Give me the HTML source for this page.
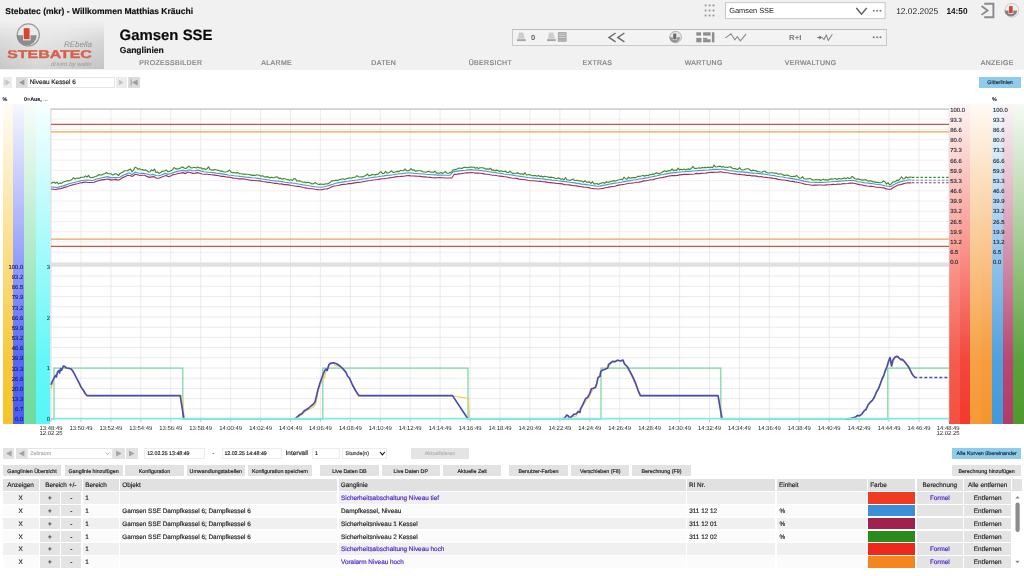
<!DOCTYPE html>
<html lang="de"><head><meta charset="utf-8"><title>Stebatec - Gamsen SSE - Ganglinien</title>
<style>
html,body{margin:0;padding:0;background:#fff;}
body{width:1024px;height:576px;overflow:hidden;position:relative;font-family:"Liberation Sans", sans-serif;}
#w{position:absolute;left:0;top:0;width:1024px;height:576px;will-change:transform;text-rendering:geometricPrecision;}
div{box-sizing:border-box;-webkit-text-stroke-width:0.16px;}
</style></head><body><div id="w">
<div style="position:absolute;left:0;top:0;width:1024px;height:69.5px;background:#f1f1f1"></div>
<div style="position:absolute;left:5.3px;top:6.0px;font-size:8.53px;font-weight:bold;line-height:10px;color:#111;white-space:pre">Stebatec (mkr) - Willkommen Matthias Kräuchi</div>
<div style="position:absolute;left:0;top:20px;width:103.8px;height:49.3px;background:linear-gradient(to bottom,#f1f1f1 0%,#e9e9e9 24%,#dcdcdc 62%,#d0d0d0 100%)"></div>
<div style="position:absolute;left:0;top:20px;width:103.8px;height:49.3px;background:linear-gradient(to right,rgba(0,0,0,0.04),rgba(255,255,255,0.14) 35%,rgba(0,0,0,0.0) 60%,rgba(0,0,0,0.055));-webkit-mask-image:linear-gradient(to bottom,transparent 0%,#000 45%);mask-image:linear-gradient(to bottom,transparent 0%,#000 45%)"></div>
<svg style="position:absolute;left:0;top:0" width="120" height="70" viewBox="0 0 120 70">
<g transform="translate(28.3,34.9)"><circle r="11.0" fill="#ebebeb" stroke="#9c9c9c" stroke-width="1.30"/><path d="M-11.77,0.33 A10.12,10.12 0 0 0 8.47,0.33 Z" fill="#8c8c8c"/><path d="M-5.33,0.13 V5.50 H2.20 V0.13 Z" fill="#ebebeb"/><rect x="-4.56" y="-6.71" width="5.83" height="11.00" fill="#d8452c"/></g>
<text x="7.2" y="58.3" font-family='"Liberation Sans", sans-serif' font-weight="bold" font-size="11.2" fill="#d5604b" stroke="#d5604b" stroke-width="0.35" textLength="84.6" lengthAdjust="spacingAndGlyphs">STEBATEC</text>
<text x="92" y="46.6" text-anchor="end" font-family='"Liberation Sans", sans-serif' font-style="italic" font-size="8" fill="#8f8f8f">REbella</text>
<text x="92" y="65.6" text-anchor="end" font-family='"Liberation Sans", sans-serif' font-style="italic" font-size="6" fill="#9a9a9a" textLength="41" lengthAdjust="spacingAndGlyphs">driven by water</text>
</svg>
<div style="position:absolute;left:119.6px;top:26.9px;font-size:14.93px;font-weight:bold;line-height:17px;color:#0a0a0a;white-space:pre">Gamsen SSE</div>
<div style="position:absolute;left:119.8px;top:44.9px;font-size:8.53px;font-weight:bold;line-height:10px;color:#111;white-space:pre">Ganglinien</div>
<div style="position:absolute;left:139.3px;top:59.8px;font-size:6.93px;line-height:8px;letter-spacing:0.38px;color:#7e7e7e;-webkit-text-stroke:0.2px #7e7e7e;white-space:pre">PROZESSBILDER</div>
<div style="position:absolute;left:261.3px;top:59.8px;font-size:6.93px;line-height:8px;letter-spacing:0.38px;color:#7e7e7e;-webkit-text-stroke:0.2px #7e7e7e;white-space:pre">ALARME</div>
<div style="position:absolute;left:371.3px;top:59.8px;font-size:6.93px;line-height:8px;letter-spacing:0.38px;color:#7e7e7e;-webkit-text-stroke:0.2px #7e7e7e;white-space:pre">DATEN</div>
<div style="position:absolute;left:468.7px;top:59.8px;font-size:6.93px;line-height:8px;letter-spacing:0.38px;color:#7e7e7e;-webkit-text-stroke:0.2px #7e7e7e;white-space:pre">ÜBERSICHT</div>
<div style="position:absolute;left:582.4px;top:59.8px;font-size:6.93px;line-height:8px;letter-spacing:0.38px;color:#7e7e7e;-webkit-text-stroke:0.2px #7e7e7e;white-space:pre">EXTRAS</div>
<div style="position:absolute;left:684.7px;top:59.8px;font-size:6.93px;line-height:8px;letter-spacing:0.38px;color:#7e7e7e;-webkit-text-stroke:0.2px #7e7e7e;white-space:pre">WARTUNG</div>
<div style="position:absolute;left:784.7px;top:59.8px;font-size:6.93px;line-height:8px;letter-spacing:0.38px;color:#7e7e7e;-webkit-text-stroke:0.2px #7e7e7e;white-space:pre">VERWALTUNG</div>
<div style="position:absolute;left:980.7px;top:59.8px;font-size:6.93px;line-height:8px;letter-spacing:0.38px;color:#7e7e7e;-webkit-text-stroke:0.2px #7e7e7e;white-space:pre">ANZEIGE</div>
<svg style="position:absolute;left:690px;top:0" width="334" height="50" viewBox="690 0 334 50">
<rect x="704.7" y="4.5" width="1.8" height="1.8" fill="#949494"/>
<rect x="704.7" y="9.6" width="1.8" height="1.8" fill="#949494"/>
<rect x="704.7" y="14.6" width="1.8" height="1.8" fill="#949494"/>
<rect x="708.7" y="4.5" width="1.8" height="1.8" fill="#949494"/>
<rect x="708.7" y="9.6" width="1.8" height="1.8" fill="#949494"/>
<rect x="708.7" y="14.6" width="1.8" height="1.8" fill="#949494"/>
<rect x="712.6" y="4.5" width="1.8" height="1.8" fill="#949494"/>
<rect x="712.6" y="9.6" width="1.8" height="1.8" fill="#949494"/>
<rect x="712.6" y="14.6" width="1.8" height="1.8" fill="#949494"/>
<rect x="725.5" y="2.6" width="159.6" height="16" fill="#fff" stroke="#c8c8c8" stroke-width="1"/>
<text x="729.2" y="13.2" font-family='"Liberation Sans", sans-serif' font-size="7.4" fill="#222">Gamsen SSE</text>
<path d="M856.3,8 L861.5,14.2 L866.7,8" fill="none" stroke="#606060" stroke-width="1.5"/>
<circle cx="873.7" cy="10.8" r="1.0" fill="#7c7c7c"/>
<circle cx="877.1" cy="10.8" r="1.0" fill="#7c7c7c"/>
<circle cx="880.5" cy="10.8" r="1.0" fill="#7c7c7c"/>
<text x="896.2" y="13.7" font-family='"Liberation Sans", sans-serif' font-size="8.4" fill="#222">12.02.2025</text>
<text x="946.4" y="13.6" font-family='"Liberation Sans", sans-serif' font-size="8.7" font-weight="bold" fill="#111" textLength="21.2" lengthAdjust="spacingAndGlyphs">14:50</text>
<path d="M981.5,6 L987.6,10.4 L981.5,14.9" fill="none" stroke="#8a8a8a" stroke-width="1.8"/>
<path d="M984.2,3.8 L993.4,3.8 L993.4,17.2 L984.2,17.2" fill="none" stroke="#8a8a8a" stroke-width="1.9"/>
<g transform="translate(1011.9,10.3)"><circle r="6.9" fill="#f4f0f0" stroke="#c2c2c2" stroke-width="0.80"/><path d="M-7.38,0.21 A6.35,6.35 0 0 0 5.31,0.21 Z" fill="#828282"/><path d="M-3.35,0.01 V3.45 H1.38 V0.01 Z" fill="#f4f0f0"/><rect x="-2.86" y="-4.21" width="3.66" height="6.90" fill="#d8452c"/></g>
</svg>
<div style="position:absolute;left:512px;top:29px;width:372.6px;height:15.4px;background:#f3f3f3;border:1px solid #c9c9c9;border-top-color:#bdbdbd;box-sizing:content-box"></div>
<svg style="position:absolute;left:506px;top:22px" width="390" height="30" viewBox="506 22 390 30">
<path d="M519.1,32.6 h4.2 l1.5,6.2 h-7.2 z" fill="#cdcdcd"/><rect x="516.9" y="39.2" width="8.8" height="1.9" fill="#a4a4a4"/>
<text x="531.1" y="40" font-family='"Liberation Sans", sans-serif' font-size="7.6" font-weight="bold" fill="#666">0</text>
<path d="M549.2,32.6 h4.2 l1.5,6.2 h-7.2 z" fill="#cdcdcd"/><rect x="547" y="39.2" width="8.8" height="1.9" fill="#a4a4a4"/>
<rect x="557.9" y="32.2" width="8.6" height="9.4" fill="#9c9c9c"/>
<rect x="557.9" y="38.6" width="8.6" height="3" fill="#b2b2b2"/>
<line x1="558.6" y1="33.9" x2="565.8" y2="33.9" stroke="#e6e6e6" stroke-width="0.8"/>
<line x1="558.6" y1="35.7" x2="565.8" y2="35.7" stroke="#e6e6e6" stroke-width="0.8"/>
<line x1="558.6" y1="37.5" x2="565.8" y2="37.5" stroke="#e6e6e6" stroke-width="0.8"/>
<path d="M615.6,33 L609,37.4 L615.6,41.8 M624.4,33 L617.8,37.4 L624.4,41.8" fill="none" stroke="#6c6c6c" stroke-width="1.45"/>
<g transform="translate(675.6,37.1)"><circle r="5.8" fill="#e6e6e6" stroke="#a2a2a2" stroke-width="0.80"/><path d="M-6.21,0.17 A5.34,5.34 0 0 0 4.47,0.17 Z" fill="#969696"/><path d="M-2.81,-0.03 V2.90 H1.16 V-0.03 Z" fill="#e6e6e6"/><rect x="-2.41" y="-3.54" width="3.07" height="5.80" fill="#6c6c6c"/></g>
<rect x="696.3" y="32.3" width="4.7" height="3.3" fill="#8e8e8e"/>
<rect x="703.1" y="32.3" width="7.5" height="3.3" fill="#8e8e8e"/>
<rect x="696.3" y="37.9" width="5.2" height="4.4" fill="#8e8e8e"/>
<rect x="703.1" y="39.3" width="7.5" height="3.0" fill="#8e8e8e"/>
<rect x="703.1" y="37.9" width="4.2" height="1.6" fill="#8e8e8e"/>
<rect x="711.9" y="32.3" width="2.5" height="10" fill="#8e8e8e"/>
<path d="M725.4,37.9 L731,33.8 L734.8,39.8 L737.3,36.6 L740.4,40.8 L746,34.1" fill="none" stroke="#8a8a8a" stroke-width="1.05"/>
<text x="789.1" y="39.5" font-family='"Liberation Sans", sans-serif' font-size="7.4" font-weight="bold" fill="#787878" textLength="12.2" lengthAdjust="spacingAndGlyphs">R+I</text>
<path d="M817.2,37.5 L820,37.5" fill="none" stroke="#6e6e6e" stroke-width="1"/><path d="M819,35.3 L822.2,37.5 L819,39.7 L819.9,37.5 Z" fill="#6a6a6a"/>
<path d="M822,37.5 L824,39.6 L826.3,35.1 L828.3,40.4 L832.4,34.3" fill="none" stroke="#868686" stroke-width="1.05"/>
<circle cx="873.7" cy="37.3" r="1.0" fill="#7c7c7c"/>
<circle cx="877.1" cy="37.3" r="1.0" fill="#7c7c7c"/>
<circle cx="880.5" cy="37.3" r="1.0" fill="#7c7c7c"/>
</svg>
<div style="position:absolute;left:2.8px;top:77.2px;width:9px;height:10.4px;background:#ececec"></div>
<div style="position:absolute;left:15.6px;top:77.2px;width:11.4px;height:10.4px;background:#dcdcdc"></div>
<div style="position:absolute;left:116.4px;top:77.2px;width:10.2px;height:10.4px;background:#ececec"></div>
<div style="position:absolute;left:128.4px;top:77.2px;width:11.4px;height:10.4px;background:#dcdcdc"></div>
<div style="position:absolute;left:27px;top:77.2px;width:87.6px;height:10.4px;background:#fff;border:1px solid #e4e4e4;box-sizing:border-box"></div>
<div style="position:absolute;left:29.7px;top:79.2px;font-size:6.4px;line-height:8px;color:#222;white-space:pre">Niveau Kessel 6</div>
<svg style="position:absolute;left:0;top:70px" width="150" height="25" viewBox="0 70 150 25">
<rect x="4.4" y="79.6" width="0.9" height="5.6" fill="#c4c4c4"/><path d="M5.6,79.6 L10.2,82.4 L5.6,85.2 Z" fill="#c4c4c4"/>
<path d="M24.4,79.4 L19,82.4 L24.4,85.4 Z" fill="#9c9c9c"/>
<path d="M118.8,79.6 L123.6,82.4 L118.8,85.2 Z" fill="#c4c4c4"/>
<rect x="130.6" y="79.4" width="1" height="6" fill="#9c9c9c"/><path d="M137.6,79.4 L132,82.4 L137.6,85.4 Z" fill="#9c9c9c"/>
</svg>
<div style="position:absolute;left:979px;top:77.4px;width:42.2px;height:10.4px;background:#8fcbea"></div>
<div style="position:absolute;left:979px;top:79.6px;width:42.2px;text-align:center;font-size:5.33px;line-height:6px;color:#1a2a3a;white-space:pre">Gitterlinien</div>
<div style="position:absolute;left:2.7px;top:103.6px;width:10.5px;height:320.2px;background:linear-gradient(to bottom,#fffcf4 0%,#f8c83b 80%,#f7c42c 100%)"></div>
<div style="position:absolute;left:13.2px;top:103.6px;width:10.8px;height:320.2px;background:linear-gradient(to bottom,#f6f7ff 0%,#5767f7 80%,#4a5cf6 100%)"></div>
<div style="position:absolute;left:24.0px;top:103.6px;width:12.4px;height:320.2px;background:linear-gradient(to bottom,#f8fdfa 0%,#7adda5 80%,#70da9e 100%)"></div>
<div style="position:absolute;left:36.4px;top:103.6px;width:14.0px;height:320.2px;background:linear-gradient(to bottom,#f7ffff 0%,#64f7f8 80%,#58f6f8 100%)"></div>
<div style="position:absolute;left:949.0px;top:103.6px;width:10.6px;height:320.2px;background:linear-gradient(to bottom,#fef6f5 0%,#f55c4c 80%,#f4503f 100%)"></div>
<div style="position:absolute;left:959.6px;top:103.6px;width:10.6px;height:320.2px;background:linear-gradient(to bottom,#fef5f4 0%,#f4473c 80%,#f3392d 100%)"></div>
<div style="position:absolute;left:970.2px;top:103.6px;width:10.8px;height:320.2px;background:linear-gradient(to bottom,#fefaf5 0%,#f6a144 80%,#f59a36 100%)"></div>
<div style="position:absolute;left:981px;top:103.6px;width:10.6px;height:320.2px;background:linear-gradient(to bottom,#fffaf5 0%,#f79c3e 80%,#f6952f 100%)"></div>
<div style="position:absolute;left:991.6px;top:103.6px;width:11.0px;height:320.2px;background:linear-gradient(to bottom,#f6fafd 0%,#4fa1dd 80%,#429ada 100%)"></div>
<div style="position:absolute;left:1002.6px;top:103.6px;width:10.4px;height:320.2px;background:linear-gradient(to bottom,#fbf5f8 0%,#b74874 80%,#b23a6a 100%)"></div>
<div style="position:absolute;left:1013px;top:103.6px;width:11.0px;height:320.2px;background:linear-gradient(to bottom,#f6faf5 0%,#5aa13d 80%,#4e9a2e 100%)"></div>
<svg style="position:absolute;left:0;top:0" width="1024" height="576" viewBox="0 0 1024 576">
<rect x="51" y="108" width="898" height="312" fill="#ffffff"/>
<line x1="51.05" y1="109" x2="51.05" y2="421.4" stroke="#dedee3" stroke-width="0.6"/>
<line x1="80.98" y1="109" x2="80.98" y2="421.4" stroke="#dedee3" stroke-width="0.6"/>
<line x1="110.91" y1="109" x2="110.91" y2="421.4" stroke="#dedee3" stroke-width="0.6"/>
<line x1="140.84" y1="109" x2="140.84" y2="421.4" stroke="#dedee3" stroke-width="0.6"/>
<line x1="170.77" y1="109" x2="170.77" y2="421.4" stroke="#dedee3" stroke-width="0.6"/>
<line x1="200.70" y1="109" x2="200.70" y2="421.4" stroke="#dedee3" stroke-width="0.6"/>
<line x1="230.63" y1="109" x2="230.63" y2="421.4" stroke="#dedee3" stroke-width="0.6"/>
<line x1="260.56" y1="109" x2="260.56" y2="421.4" stroke="#dedee3" stroke-width="0.6"/>
<line x1="290.49" y1="109" x2="290.49" y2="421.4" stroke="#dedee3" stroke-width="0.6"/>
<line x1="320.42" y1="109" x2="320.42" y2="421.4" stroke="#dedee3" stroke-width="0.6"/>
<line x1="350.35" y1="109" x2="350.35" y2="421.4" stroke="#dedee3" stroke-width="0.6"/>
<line x1="380.28" y1="109" x2="380.28" y2="421.4" stroke="#dedee3" stroke-width="0.6"/>
<line x1="410.21" y1="109" x2="410.21" y2="421.4" stroke="#dedee3" stroke-width="0.6"/>
<line x1="440.14" y1="109" x2="440.14" y2="421.4" stroke="#dedee3" stroke-width="0.6"/>
<line x1="470.07" y1="109" x2="470.07" y2="421.4" stroke="#dedee3" stroke-width="0.6"/>
<line x1="500.00" y1="109" x2="500.00" y2="421.4" stroke="#dedee3" stroke-width="0.6"/>
<line x1="529.93" y1="109" x2="529.93" y2="421.4" stroke="#dedee3" stroke-width="0.6"/>
<line x1="559.86" y1="109" x2="559.86" y2="421.4" stroke="#dedee3" stroke-width="0.6"/>
<line x1="589.79" y1="109" x2="589.79" y2="421.4" stroke="#dedee3" stroke-width="0.6"/>
<line x1="619.72" y1="109" x2="619.72" y2="421.4" stroke="#dedee3" stroke-width="0.6"/>
<line x1="649.65" y1="109" x2="649.65" y2="421.4" stroke="#dedee3" stroke-width="0.6"/>
<line x1="679.58" y1="109" x2="679.58" y2="421.4" stroke="#dedee3" stroke-width="0.6"/>
<line x1="709.51" y1="109" x2="709.51" y2="421.4" stroke="#dedee3" stroke-width="0.6"/>
<line x1="739.44" y1="109" x2="739.44" y2="421.4" stroke="#dedee3" stroke-width="0.6"/>
<line x1="769.37" y1="109" x2="769.37" y2="421.4" stroke="#dedee3" stroke-width="0.6"/>
<line x1="799.30" y1="109" x2="799.30" y2="421.4" stroke="#dedee3" stroke-width="0.6"/>
<line x1="829.23" y1="109" x2="829.23" y2="421.4" stroke="#dedee3" stroke-width="0.6"/>
<line x1="859.16" y1="109" x2="859.16" y2="421.4" stroke="#dedee3" stroke-width="0.6"/>
<line x1="889.09" y1="109" x2="889.09" y2="421.4" stroke="#dedee3" stroke-width="0.6"/>
<line x1="919.02" y1="109" x2="919.02" y2="421.4" stroke="#dedee3" stroke-width="0.6"/>
<line x1="948.95" y1="109" x2="948.95" y2="421.4" stroke="#dedee3" stroke-width="0.6"/>
<line x1="51.05" y1="419.6" x2="51.05" y2="422" stroke="#a9b8bd" stroke-width="0.7"/>
<line x1="80.98" y1="419.6" x2="80.98" y2="422" stroke="#a9b8bd" stroke-width="0.7"/>
<line x1="110.91" y1="419.6" x2="110.91" y2="422" stroke="#a9b8bd" stroke-width="0.7"/>
<line x1="140.84" y1="419.6" x2="140.84" y2="422" stroke="#a9b8bd" stroke-width="0.7"/>
<line x1="170.77" y1="419.6" x2="170.77" y2="422" stroke="#a9b8bd" stroke-width="0.7"/>
<line x1="200.70" y1="419.6" x2="200.70" y2="422" stroke="#a9b8bd" stroke-width="0.7"/>
<line x1="230.63" y1="419.6" x2="230.63" y2="422" stroke="#a9b8bd" stroke-width="0.7"/>
<line x1="260.56" y1="419.6" x2="260.56" y2="422" stroke="#a9b8bd" stroke-width="0.7"/>
<line x1="290.49" y1="419.6" x2="290.49" y2="422" stroke="#a9b8bd" stroke-width="0.7"/>
<line x1="320.42" y1="419.6" x2="320.42" y2="422" stroke="#a9b8bd" stroke-width="0.7"/>
<line x1="350.35" y1="419.6" x2="350.35" y2="422" stroke="#a9b8bd" stroke-width="0.7"/>
<line x1="380.28" y1="419.6" x2="380.28" y2="422" stroke="#a9b8bd" stroke-width="0.7"/>
<line x1="410.21" y1="419.6" x2="410.21" y2="422" stroke="#a9b8bd" stroke-width="0.7"/>
<line x1="440.14" y1="419.6" x2="440.14" y2="422" stroke="#a9b8bd" stroke-width="0.7"/>
<line x1="470.07" y1="419.6" x2="470.07" y2="422" stroke="#a9b8bd" stroke-width="0.7"/>
<line x1="500.00" y1="419.6" x2="500.00" y2="422" stroke="#a9b8bd" stroke-width="0.7"/>
<line x1="529.93" y1="419.6" x2="529.93" y2="422" stroke="#a9b8bd" stroke-width="0.7"/>
<line x1="559.86" y1="419.6" x2="559.86" y2="422" stroke="#a9b8bd" stroke-width="0.7"/>
<line x1="589.79" y1="419.6" x2="589.79" y2="422" stroke="#a9b8bd" stroke-width="0.7"/>
<line x1="619.72" y1="419.6" x2="619.72" y2="422" stroke="#a9b8bd" stroke-width="0.7"/>
<line x1="649.65" y1="419.6" x2="649.65" y2="422" stroke="#a9b8bd" stroke-width="0.7"/>
<line x1="679.58" y1="419.6" x2="679.58" y2="422" stroke="#a9b8bd" stroke-width="0.7"/>
<line x1="709.51" y1="419.6" x2="709.51" y2="422" stroke="#a9b8bd" stroke-width="0.7"/>
<line x1="739.44" y1="419.6" x2="739.44" y2="422" stroke="#a9b8bd" stroke-width="0.7"/>
<line x1="769.37" y1="419.6" x2="769.37" y2="422" stroke="#a9b8bd" stroke-width="0.7"/>
<line x1="799.30" y1="419.6" x2="799.30" y2="422" stroke="#a9b8bd" stroke-width="0.7"/>
<line x1="829.23" y1="419.6" x2="829.23" y2="422" stroke="#a9b8bd" stroke-width="0.7"/>
<line x1="859.16" y1="419.6" x2="859.16" y2="422" stroke="#a9b8bd" stroke-width="0.7"/>
<line x1="889.09" y1="419.6" x2="889.09" y2="422" stroke="#a9b8bd" stroke-width="0.7"/>
<line x1="919.02" y1="419.6" x2="919.02" y2="422" stroke="#a9b8bd" stroke-width="0.7"/>
<line x1="948.95" y1="419.6" x2="948.95" y2="422" stroke="#a9b8bd" stroke-width="0.7"/>
<line x1="51" y1="119.14" x2="949" y2="119.14" stroke="#f0e4e4" stroke-width="0.65"/>
<line x1="51" y1="129.38" x2="949" y2="129.38" stroke="#f0e4e4" stroke-width="0.65"/>
<line x1="51" y1="139.62" x2="949" y2="139.62" stroke="#f0e4e4" stroke-width="0.65"/>
<line x1="51" y1="149.86" x2="949" y2="149.86" stroke="#f0e4e4" stroke-width="0.65"/>
<line x1="51" y1="160.10" x2="949" y2="160.10" stroke="#f0e4e4" stroke-width="0.65"/>
<line x1="51" y1="170.34" x2="949" y2="170.34" stroke="#f0e4e4" stroke-width="0.65"/>
<line x1="51" y1="180.58" x2="949" y2="180.58" stroke="#f0e4e4" stroke-width="0.65"/>
<line x1="51" y1="190.82" x2="949" y2="190.82" stroke="#f0e4e4" stroke-width="0.65"/>
<line x1="51" y1="201.06" x2="949" y2="201.06" stroke="#f0e4e4" stroke-width="0.65"/>
<line x1="51" y1="211.30" x2="949" y2="211.30" stroke="#f0e4e4" stroke-width="0.65"/>
<line x1="51" y1="221.54" x2="949" y2="221.54" stroke="#f0e4e4" stroke-width="0.65"/>
<line x1="51" y1="231.78" x2="949" y2="231.78" stroke="#f0e4e4" stroke-width="0.65"/>
<line x1="51" y1="242.02" x2="949" y2="242.02" stroke="#f0e4e4" stroke-width="0.65"/>
<line x1="51" y1="252.26" x2="949" y2="252.26" stroke="#f0e4e4" stroke-width="0.65"/>
<line x1="51" y1="276.02" x2="949" y2="276.02" stroke="#dfdfdf" stroke-width="0.65"/>
<line x1="51" y1="286.24" x2="949" y2="286.24" stroke="#dfdfdf" stroke-width="0.65"/>
<line x1="51" y1="296.46" x2="949" y2="296.46" stroke="#dfdfdf" stroke-width="0.65"/>
<line x1="51" y1="306.68" x2="949" y2="306.68" stroke="#dfdfdf" stroke-width="0.65"/>
<line x1="51" y1="316.90" x2="949" y2="316.90" stroke="#dfdfdf" stroke-width="0.65"/>
<line x1="51" y1="327.12" x2="949" y2="327.12" stroke="#dfdfdf" stroke-width="0.65"/>
<line x1="51" y1="337.34" x2="949" y2="337.34" stroke="#dfdfdf" stroke-width="0.65"/>
<line x1="51" y1="347.56" x2="949" y2="347.56" stroke="#dfdfdf" stroke-width="0.65"/>
<line x1="51" y1="357.78" x2="949" y2="357.78" stroke="#dfdfdf" stroke-width="0.65"/>
<line x1="51" y1="368.00" x2="949" y2="368.00" stroke="#dfdfdf" stroke-width="0.65"/>
<line x1="51" y1="378.22" x2="949" y2="378.22" stroke="#dfdfdf" stroke-width="0.65"/>
<line x1="51" y1="388.44" x2="949" y2="388.44" stroke="#dfdfdf" stroke-width="0.65"/>
<line x1="51" y1="398.66" x2="949" y2="398.66" stroke="#dfdfdf" stroke-width="0.65"/>
<line x1="51" y1="408.88" x2="949" y2="408.88" stroke="#dfdfdf" stroke-width="0.65"/>
<rect x="50.6" y="108.4" width="898.4" height="1.4" fill="#c6c6c6"/>
<rect x="50.5" y="108.4" width="0.7" height="311" fill="#ccd6d6"/>
<rect x="51" y="262.4" width="898" height="4.4" fill="#e1e1e1"/>
<line x1="51" y1="124.3" x2="949" y2="124.3" stroke="#d7523c" stroke-width="1.25"/>
<line x1="51" y1="131.9" x2="949" y2="131.9" stroke="#efa259" stroke-width="1.25"/>
<line x1="51" y1="239.1" x2="949" y2="239.1" stroke="#efa259" stroke-width="1.25"/>
<line x1="51" y1="246.4" x2="949" y2="246.4" stroke="#d7523c" stroke-width="1.25"/>
<path d="M51.0,189.0 L53.4,189.2 L55.8,189.5 L58.2,188.9 L60.6,188.6 L63.0,187.9 L65.4,187.1 L67.8,186.5 L70.2,185.5 L72.6,184.9 L75.0,184.2 L77.4,183.7 L79.8,183.0 L82.2,182.6 L84.6,182.1 L87.0,182.2 L89.4,182.5 L91.8,182.5 L94.2,182.3 L96.6,181.3 L99.0,180.5 L101.4,179.9 L103.8,179.6 L106.2,179.3 L108.6,179.1 L111.0,180.1 L113.4,179.7 L115.8,179.4 L118.2,180.2 L120.6,179.0 L123.0,177.4 L125.4,176.6 L127.8,175.3 L130.2,175.8 L132.6,176.4 L135.0,174.3 L137.4,174.7 L139.8,175.5 L142.2,175.3 L144.6,175.2 L147.0,176.4 L149.4,177.4 L151.8,176.9 L154.2,176.6 L156.6,178.3 L159.0,178.2 L161.4,177.2 L163.8,176.3 L166.2,175.5 L168.6,176.8 L171.0,175.8 L173.4,174.6 L175.8,174.2 L178.2,173.5 L180.6,173.1 L183.0,172.6 L185.4,173.6 L187.8,172.0 L190.2,172.5 L192.6,173.4 L195.0,173.1 L197.4,172.6 L199.8,173.3 L202.2,174.0 L204.6,174.2 L207.0,174.3 L209.4,174.5 L211.8,174.8 L214.2,175.1 L216.6,175.4 L219.0,175.8 L221.4,176.4 L223.8,176.4 L226.2,177.0 L228.6,177.1 L231.0,177.5 L233.4,178.1 L235.8,178.3 L238.2,178.8 L240.6,178.8 L243.0,178.9 L245.4,179.3 L247.8,179.7 L250.2,180.1 L252.6,180.4 L255.0,180.5 L257.4,180.7 L259.8,180.9 L262.2,181.5 L264.6,181.7 L267.0,182.1 L269.4,182.4 L271.8,182.7 L274.2,183.3 L276.6,183.3 L279.0,184.0 L281.4,183.9 L283.8,184.6 L286.2,184.6 L288.6,184.9 L291.0,185.5 L293.4,185.7 L295.8,186.3 L298.2,186.4 L300.6,186.8 L303.0,187.5 L305.4,187.9 L307.8,188.3 L310.2,188.7 L312.6,188.8 L315.0,189.3 L317.4,189.6 L319.8,189.7 L322.2,189.8 L324.6,189.0 L327.0,188.9 L329.4,188.0 L331.8,186.8 L334.2,186.0 L336.6,185.8 L339.0,185.3 L341.4,184.6 L343.8,184.4 L346.2,184.2 L348.6,183.6 L351.0,183.6 L353.4,183.1 L355.8,182.6 L358.2,182.4 L360.6,182.2 L363.0,181.7 L365.4,181.3 L367.8,180.7 L370.2,180.5 L372.6,180.0 L375.0,179.8 L377.4,179.5 L379.8,179.1 L382.2,178.7 L384.6,178.6 L387.0,178.3 L389.4,177.9 L391.8,177.5 L394.2,177.1 L396.6,176.6 L399.0,176.7 L401.4,176.4 L403.8,176.2 L406.2,175.7 L408.6,175.6 L411.0,175.9 L413.4,176.0 L415.8,176.1 L418.2,176.2 L420.6,176.4 L423.0,176.9 L425.4,176.9 L427.8,177.2 L430.2,177.4 L432.6,177.8 L435.0,177.9 L437.4,177.7 L439.8,177.6 L442.2,177.8 L444.6,178.0 L447.0,178.0 L449.4,178.0 L451.8,178.0 L454.2,174.3 L456.6,174.3 L459.0,173.9 L461.4,173.6 L463.8,173.2 L466.2,172.8 L468.6,172.8 L471.0,172.5 L473.4,172.7 L475.8,173.1 L478.2,173.1 L480.6,173.2 L483.0,173.6 L485.4,174.1 L487.8,174.2 L490.2,174.8 L492.6,175.2 L495.0,175.2 L497.4,175.8 L499.8,176.1 L502.2,176.4 L504.6,176.7 L507.0,177.0 L509.4,177.6 L511.8,178.0 L514.2,178.2 L516.6,178.4 L519.0,179.1 L521.4,179.4 L523.8,179.5 L526.2,180.0 L528.6,180.5 L531.0,180.7 L533.4,180.8 L535.8,181.0 L538.2,181.3 L540.6,181.4 L543.0,181.7 L545.4,181.9 L547.8,182.4 L550.2,182.6 L552.6,182.9 L555.0,183.1 L557.4,183.5 L559.8,183.6 L562.2,183.9 L564.6,184.6 L567.0,184.7 L569.4,184.9 L571.8,185.4 L574.2,185.8 L576.6,185.9 L579.0,186.4 L581.4,186.7 L583.8,187.1 L586.2,187.2 L588.6,187.6 L591.0,188.3 L593.4,188.6 L595.8,188.7 L598.2,189.0 L600.6,188.7 L603.0,188.4 L605.4,187.7 L607.8,187.4 L610.2,186.9 L612.6,186.5 L615.0,186.2 L617.4,185.4 L619.8,184.9 L622.2,184.6 L624.6,184.2 L627.0,183.7 L629.4,183.3 L631.8,183.1 L634.2,182.8 L636.6,182.2 L639.0,182.1 L641.4,181.6 L643.8,180.9 L646.2,180.7 L648.6,180.2 L651.0,179.7 L653.4,179.6 L655.8,178.7 L658.2,178.3 L660.6,177.8 L663.0,177.4 L665.4,176.9 L667.8,176.3 L670.2,175.9 L672.6,175.5 L675.0,175.6 L677.4,175.4 L679.8,174.9 L682.2,174.6 L684.6,174.4 L687.0,174.3 L689.4,174.3 L691.8,174.2 L694.2,174.0 L696.6,173.4 L699.0,173.6 L701.4,173.4 L703.8,173.2 L706.2,173.1 L708.6,172.5 L711.0,172.3 L713.4,172.4 L715.8,172.3 L718.2,172.1 L720.6,171.7 L723.0,172.2 L725.4,172.7 L727.8,172.8 L730.2,173.3 L732.6,173.7 L735.0,173.9 L737.4,174.3 L739.8,174.4 L742.2,174.7 L744.6,174.9 L747.0,175.4 L749.4,175.3 L751.8,175.9 L754.2,175.9 L756.6,176.1 L759.0,176.7 L761.4,176.6 L763.8,177.2 L766.2,177.4 L768.6,177.8 L771.0,177.9 L773.4,178.4 L775.8,178.6 L778.2,179.4 L780.6,179.7 L783.0,180.0 L785.4,180.3 L787.8,180.6 L790.2,181.2 L792.6,181.4 L795.0,181.9 L797.4,182.2 L799.8,182.7 L802.2,183.2 L804.6,184.1 L807.0,184.5 L809.4,184.8 L811.8,185.2 L814.2,185.0 L816.6,185.1 L819.0,185.0 L821.4,185.0 L823.8,185.2 L826.2,184.9 L828.6,184.7 L831.0,184.6 L833.4,184.4 L835.8,184.5 L838.2,184.0 L840.6,184.2 L843.0,183.6 L845.4,183.7 L847.8,183.5 L850.2,183.1 L852.6,183.0 L855.0,183.5 L857.4,184.1 L859.8,184.6 L862.2,185.0 L864.6,185.6 L867.0,186.0 L869.4,186.3 L871.8,186.3 L874.2,186.7 L876.6,187.2 L879.0,187.2 L881.4,187.8 L883.8,187.9 L886.2,188.9 L888.6,189.2 L891.0,189.3 L893.4,187.5 L895.8,186.2 L898.2,185.0 L900.6,184.6 L903.0,183.9 L905.4,183.2 L907.8,182.8 L910.2,182.9 L911.6,182.7" fill="none" stroke="#a2305a" stroke-width="1.15" stroke-linejoin="round"/>
<line x1="912" y1="182.7" x2="949" y2="182.7" stroke="#a2305a" stroke-width="1.15" stroke-dasharray="2.4 1.87"/>
<path d="M51.0,187.0 L54.0,187.1 L57.0,187.5 L60.0,186.6 L63.0,185.9 L66.0,184.9 L69.0,183.8 L72.0,183.0 L75.0,182.2 L78.0,181.5 L81.0,180.8 L84.0,180.3 L87.0,180.1 L90.0,180.3 L93.0,180.5 L96.0,179.3 L99.0,178.5 L102.0,177.7 L105.0,177.1 L108.0,176.6 L111.0,177.9 L114.0,177.6 L117.0,177.6 L120.0,177.2 L123.0,175.2 L126.0,174.1 L129.0,172.8 L132.0,174.7 L135.0,172.1 L138.0,173.0 L141.0,173.4 L144.0,173.3 L147.0,174.0 L150.0,175.0 L153.0,174.4 L156.0,175.5 L159.0,175.8 L162.0,174.7 L165.0,173.4 L168.0,174.4 L171.0,173.5 L174.0,172.4 L177.0,171.6 L180.0,170.8 L183.0,170.4 L186.0,171.1 L189.0,169.7 L192.0,170.6 L195.0,170.8 L198.0,170.1 L201.0,171.1 L204.0,171.8 L207.0,172.2 L210.0,172.3 L213.0,172.6 L216.0,173.1 L219.0,173.4 L222.0,173.9 L225.0,174.4 L228.0,175.0 L231.0,175.3 L234.0,175.7 L237.0,176.0 L240.0,176.4 L243.0,176.7 L246.0,177.1 L249.0,177.4 L252.0,177.8 L255.0,178.0 L258.0,178.4 L261.0,178.9 L264.0,179.3 L267.0,179.7 L270.0,180.2 L273.0,180.7 L276.0,180.9 L279.0,181.2 L282.0,181.6 L285.0,182.2 L288.0,182.6 L291.0,182.9 L294.0,183.3 L297.0,183.8 L300.0,184.3 L303.0,184.9 L306.0,185.3 L309.0,185.8 L312.0,186.3 L315.0,186.8 L318.0,187.0 L321.0,187.2 L324.0,186.8 L327.0,186.0 L330.0,185.1 L333.0,184.2 L336.0,183.3 L339.0,182.6 L342.0,182.1 L345.0,181.6 L348.0,181.3 L351.0,180.7 L354.0,180.4 L357.0,180.0 L360.0,179.5 L363.0,179.0 L366.0,178.6 L369.0,178.0 L372.0,177.5 L375.0,177.1 L378.0,176.7 L381.0,176.2 L384.0,175.9 L387.0,175.4 L390.0,175.1 L393.0,174.7 L396.0,174.2 L399.0,173.8 L402.0,173.6 L405.0,173.2 L408.0,172.8 L411.0,173.0 L414.0,173.3 L417.0,173.5 L420.0,173.7 L423.0,174.0 L426.0,174.3 L429.0,174.5 L432.0,174.7 L435.0,174.9 L438.0,175.1 L441.0,175.0 L444.0,175.2 L447.0,175.2 L450.0,175.1 L453.0,171.9 L456.0,171.4 L459.0,170.9 L462.0,170.6 L465.0,170.3 L468.0,169.9 L471.0,169.6 L474.0,170.0 L477.0,170.1 L480.0,170.5 L483.0,170.9 L486.0,171.2 L489.0,171.7 L492.0,172.2 L495.0,172.4 L498.0,173.0 L501.0,173.4 L504.0,174.0 L507.0,174.5 L510.0,174.8 L513.0,175.1 L516.0,175.7 L519.0,176.1 L522.0,176.6 L525.0,177.0 L528.0,177.5 L531.0,177.8 L534.0,178.1 L537.0,178.4 L540.0,178.8 L543.0,178.9 L546.0,179.4 L549.0,179.7 L552.0,180.1 L555.0,180.3 L558.0,180.8 L561.0,181.1 L564.0,181.4 L567.0,181.9 L570.0,182.3 L573.0,182.6 L576.0,183.1 L579.0,183.6 L582.0,184.1 L585.0,184.4 L588.0,184.9 L591.0,185.3 L594.0,185.7 L597.0,186.2 L600.0,186.1 L603.0,185.4 L606.0,184.9 L609.0,184.2 L612.0,183.6 L615.0,183.1 L618.0,182.7 L621.0,182.2 L624.0,181.6 L627.0,181.1 L630.0,180.6 L633.0,180.0 L636.0,179.7 L639.0,179.0 L642.0,178.6 L645.0,178.1 L648.0,177.6 L651.0,177.0 L654.0,176.4 L657.0,175.8 L660.0,174.9 L663.0,174.5 L666.0,173.9 L669.0,173.4 L672.0,172.9 L675.0,172.6 L678.0,172.3 L681.0,172.0 L684.0,171.7 L687.0,171.4 L690.0,171.4 L693.0,171.0 L696.0,170.8 L699.0,170.6 L702.0,170.4 L705.0,170.2 L708.0,170.0 L711.0,169.7 L714.0,169.4 L717.0,169.4 L720.0,169.2 L723.0,169.2 L726.0,169.9 L729.0,170.5 L732.0,170.9 L735.0,171.2 L738.0,171.7 L741.0,171.9 L744.0,172.1 L747.0,172.4 L750.0,172.9 L753.0,173.1 L756.0,173.3 L759.0,173.6 L762.0,173.9 L765.0,174.2 L768.0,174.8 L771.0,175.2 L774.0,175.6 L777.0,176.3 L780.0,176.7 L783.0,177.0 L786.0,177.7 L789.0,178.1 L792.0,178.6 L795.0,179.1 L798.0,179.7 L801.0,180.4 L804.0,181.1 L807.0,181.6 L810.0,182.2 L813.0,182.2 L816.0,182.4 L819.0,182.4 L822.0,182.4 L825.0,182.2 L828.0,182.0 L831.0,181.8 L834.0,181.5 L837.0,181.4 L840.0,181.1 L843.0,181.0 L846.0,180.6 L849.0,180.5 L852.0,180.2 L855.0,180.8 L858.0,181.7 L861.0,182.0 L864.0,182.6 L867.0,183.0 L870.0,183.4 L873.0,183.8 L876.0,184.3 L879.0,184.5 L882.0,185.0 L885.0,185.7 L888.0,186.3 L891.0,186.4 L894.0,184.4 L897.0,182.9 L900.0,181.9 L903.0,181.1 L906.0,180.5 L909.0,179.8 L911.6,180.2" fill="none" stroke="#4a9ad8" stroke-width="1.15" stroke-linejoin="round"/>
<line x1="912" y1="180.2" x2="949" y2="180.2" stroke="#4a9ad8" stroke-width="1.15" stroke-dasharray="2.4 1.87"/>
<path d="M51.0,183.4 L52.5,182.4 L54.0,182.2 L55.5,183.3 L57.0,182.2 L58.5,184.0 L60.0,182.9 L61.5,183.4 L63.0,182.3 L64.5,181.5 L66.0,181.3 L67.5,180.6 L69.0,180.9 L70.5,180.2 L72.0,179.5 L73.5,177.7 L75.0,179.1 L76.5,178.2 L78.0,178.0 L79.5,178.2 L81.0,177.2 L82.5,177.2 L84.0,177.2 L85.5,175.9 L87.0,177.1 L88.5,175.3 L90.0,177.4 L91.5,177.7 L93.0,177.4 L94.5,176.7 L96.0,176.6 L97.5,175.6 L99.0,174.6 L100.5,175.0 L102.0,174.9 L103.5,174.1 L105.0,173.4 L106.5,172.4 L108.0,173.7 L109.5,173.7 L111.0,173.7 L112.5,174.9 L114.0,174.6 L115.5,173.7 L117.0,174.3 L118.5,175.6 L120.0,173.6 L121.5,172.7 L123.0,172.1 L124.5,170.8 L126.0,170.7 L127.5,170.8 L129.0,169.7 L130.5,169.1 L132.0,171.8 L133.5,170.2 L135.0,167.2 L136.5,167.8 L138.0,169.3 L139.5,168.6 L141.0,169.7 L142.5,169.6 L144.0,170.2 L145.5,169.9 L147.0,170.7 L148.5,172.0 L150.0,171.8 L151.5,169.8 L153.0,170.9 L154.5,169.0 L156.0,172.4 L157.5,172.0 L159.0,173.4 L160.5,172.4 L162.0,171.4 L163.5,171.3 L165.0,170.7 L166.5,170.0 L168.0,171.8 L169.5,171.4 L171.0,170.7 L172.5,169.7 L174.0,167.5 L175.5,168.6 L177.0,169.1 L178.5,168.7 L180.0,168.4 L181.5,167.1 L183.0,167.0 L184.5,168.2 L186.0,168.5 L187.5,167.3 L189.0,166.1 L190.5,167.6 L192.0,168.0 L193.5,167.5 L195.0,167.5 L196.5,168.0 L198.0,167.1 L199.5,168.0 L201.0,167.7 L202.5,169.2 L204.0,168.4 L205.5,169.5 L207.0,168.9 L208.5,166.8 L210.0,169.5 L211.5,170.0 L213.0,170.1 L214.5,169.5 L216.0,169.8 L217.5,170.3 L219.0,170.4 L220.5,171.2 L222.0,170.9 L223.5,171.7 L225.0,172.0 L226.5,171.8 L228.0,171.4 L229.5,170.0 L231.0,171.9 L232.5,172.8 L234.0,172.5 L235.5,173.0 L237.0,172.6 L238.5,173.0 L240.0,173.8 L241.5,173.7 L243.0,174.3 L244.5,174.1 L246.0,174.2 L247.5,174.3 L249.0,174.5 L250.5,174.9 L252.0,175.4 L253.5,175.1 L255.0,175.6 L256.5,174.9 L258.0,175.0 L259.5,175.2 L261.0,176.3 L262.5,175.8 L264.0,176.6 L265.5,177.2 L267.0,176.6 L268.5,177.0 L270.0,178.0 L271.5,177.2 L273.0,177.8 L274.5,177.6 L276.0,176.9 L277.5,177.0 L279.0,178.6 L280.5,178.1 L282.0,179.2 L283.5,178.6 L285.0,178.7 L286.5,179.2 L288.0,179.6 L289.5,180.3 L291.0,179.7 L292.5,180.5 L294.0,178.5 L295.5,178.9 L297.0,181.3 L298.5,180.8 L300.0,181.1 L301.5,181.8 L303.0,182.2 L304.5,182.1 L306.0,182.6 L307.5,182.4 L309.0,182.5 L310.5,183.1 L312.0,183.9 L313.5,183.8 L315.0,182.6 L316.5,183.5 L318.0,184.3 L319.5,184.4 L321.0,184.1 L322.5,184.2 L324.0,184.4 L325.5,183.7 L327.0,184.0 L328.5,183.4 L330.0,182.6 L331.5,180.8 L333.0,180.8 L334.5,180.6 L336.0,180.1 L337.5,180.7 L339.0,179.6 L340.5,179.4 L342.0,179.0 L343.5,178.9 L345.0,179.6 L346.5,178.5 L348.0,178.4 L349.5,177.8 L351.0,178.2 L352.5,177.6 L354.0,177.2 L355.5,177.1 L357.0,175.7 L358.5,176.9 L360.0,177.0 L361.5,176.9 L363.0,176.9 L364.5,176.0 L366.0,175.5 L367.5,174.0 L369.0,175.8 L370.5,175.4 L372.0,174.4 L373.5,174.7 L375.0,174.9 L376.5,174.4 L378.0,174.3 L379.5,172.6 L381.0,171.7 L382.5,173.6 L384.0,173.5 L385.5,171.4 L387.0,173.2 L388.5,172.8 L390.0,172.0 L391.5,170.9 L393.0,172.4 L394.5,172.2 L396.0,171.7 L397.5,171.4 L399.0,171.6 L400.5,170.3 L402.0,170.7 L403.5,170.6 L405.0,169.0 L406.5,170.7 L408.0,170.6 L409.5,170.4 L411.0,168.6 L412.5,170.2 L414.0,169.9 L415.5,171.2 L417.0,170.9 L418.5,170.7 L420.0,170.8 L421.5,170.9 L423.0,172.0 L424.5,172.0 L426.0,172.2 L427.5,171.6 L429.0,171.2 L430.5,172.2 L432.0,172.1 L433.5,172.3 L435.0,171.3 L436.5,173.0 L438.0,173.1 L439.5,173.2 L441.0,172.5 L442.5,173.4 L444.0,172.6 L445.5,171.6 L447.0,173.2 L448.5,173.2 L450.0,172.4 L451.5,172.2 L453.0,170.0 L454.5,169.6 L456.0,169.5 L457.5,168.8 L459.0,168.0 L460.5,168.3 L462.0,168.4 L463.5,167.5 L465.0,167.4 L466.5,167.5 L468.0,167.8 L469.5,167.1 L471.0,167.0 L472.5,167.2 L474.0,167.1 L475.5,168.2 L477.0,167.5 L478.5,168.6 L480.0,167.7 L481.5,167.7 L483.0,167.9 L484.5,168.3 L486.0,169.3 L487.5,168.9 L489.0,169.3 L490.5,168.2 L492.0,170.3 L493.5,169.9 L495.0,170.6 L496.5,170.1 L498.0,170.5 L499.5,171.4 L501.0,170.7 L502.5,171.5 L504.0,171.5 L505.5,171.1 L507.0,172.5 L508.5,172.6 L510.0,171.1 L511.5,172.7 L513.0,173.4 L514.5,173.3 L516.0,173.2 L517.5,172.9 L519.0,173.4 L520.5,174.1 L522.0,173.7 L523.5,174.6 L525.0,172.7 L526.5,175.0 L528.0,174.7 L529.5,174.6 L531.0,175.3 L532.5,175.7 L534.0,175.6 L535.5,175.5 L537.0,176.2 L538.5,175.5 L540.0,176.5 L541.5,176.1 L543.0,177.1 L544.5,176.2 L546.0,176.8 L547.5,176.7 L549.0,177.6 L550.5,177.1 L552.0,177.4 L553.5,177.5 L555.0,178.3 L556.5,178.7 L558.0,177.9 L559.5,178.4 L561.0,179.3 L562.5,178.8 L564.0,179.7 L565.5,177.5 L567.0,180.0 L568.5,180.0 L570.0,180.5 L571.5,179.7 L573.0,179.0 L574.5,180.4 L576.0,180.5 L577.5,180.4 L579.0,181.0 L580.5,180.9 L582.0,181.3 L583.5,182.2 L585.0,180.6 L586.5,182.1 L588.0,182.1 L589.5,181.9 L591.0,183.3 L592.5,181.7 L594.0,183.8 L595.5,183.8 L597.0,183.5 L598.5,184.4 L600.0,183.4 L601.5,183.1 L603.0,182.4 L604.5,183.3 L606.0,181.9 L607.5,182.1 L609.0,182.4 L610.5,181.2 L612.0,181.3 L613.5,180.6 L615.0,181.1 L616.5,180.8 L618.0,180.0 L619.5,179.8 L621.0,179.2 L622.5,179.8 L624.0,177.2 L625.5,178.7 L627.0,179.2 L628.5,177.2 L630.0,178.2 L631.5,177.9 L633.0,177.6 L634.5,177.6 L636.0,177.6 L637.5,176.4 L639.0,176.4 L640.5,176.3 L642.0,175.8 L643.5,175.6 L645.0,176.1 L646.5,175.2 L648.0,175.8 L649.5,174.6 L651.0,174.8 L652.5,173.9 L654.0,174.4 L655.5,173.1 L657.0,172.9 L658.5,173.6 L660.0,173.2 L661.5,172.8 L663.0,171.7 L664.5,170.8 L666.0,171.6 L667.5,171.1 L669.0,170.6 L670.5,170.8 L672.0,168.9 L673.5,170.6 L675.0,170.0 L676.5,170.5 L678.0,168.1 L679.5,169.9 L681.0,169.2 L682.5,169.8 L684.0,169.1 L685.5,169.8 L687.0,169.2 L688.5,168.9 L690.0,169.5 L691.5,168.4 L693.0,166.4 L694.5,168.5 L696.0,168.4 L697.5,168.3 L699.0,167.7 L700.5,168.3 L702.0,167.5 L703.5,167.8 L705.0,167.4 L706.5,167.7 L708.0,167.1 L709.5,167.8 L711.0,166.9 L712.5,167.7 L714.0,165.1 L715.5,166.8 L717.0,167.0 L718.5,166.3 L720.0,166.3 L721.5,167.1 L723.0,166.5 L724.5,167.1 L726.0,167.3 L727.5,167.4 L729.0,167.0 L730.5,166.7 L732.0,168.0 L733.5,168.8 L735.0,168.6 L736.5,169.1 L738.0,169.4 L739.5,167.7 L741.0,169.5 L742.5,170.0 L744.0,169.7 L745.5,169.0 L747.0,168.7 L748.5,168.7 L750.0,169.9 L751.5,170.9 L753.0,170.1 L754.5,170.7 L756.0,170.5 L757.5,171.8 L759.0,171.7 L760.5,172.0 L762.0,172.2 L763.5,171.3 L765.0,171.2 L766.5,172.5 L768.0,172.9 L769.5,173.0 L771.0,172.8 L772.5,172.7 L774.0,173.3 L775.5,173.0 L777.0,173.4 L778.5,174.2 L780.0,173.8 L781.5,174.0 L783.0,174.9 L784.5,175.4 L786.0,175.3 L787.5,174.9 L789.0,175.8 L790.5,176.3 L792.0,176.8 L793.5,176.2 L795.0,176.6 L796.5,175.4 L798.0,176.9 L799.5,178.2 L801.0,178.1 L802.5,176.7 L804.0,178.8 L805.5,179.0 L807.0,178.8 L808.5,179.0 L810.0,178.3 L811.5,179.4 L813.0,179.9 L814.5,180.0 L816.0,179.5 L817.5,179.7 L819.0,179.5 L820.5,180.4 L822.0,179.8 L823.5,179.2 L825.0,179.9 L826.5,179.9 L828.0,180.2 L829.5,179.2 L831.0,178.9 L832.5,179.2 L834.0,178.7 L835.5,178.5 L837.0,179.6 L838.5,178.5 L840.0,178.8 L841.5,179.1 L843.0,178.3 L844.5,177.9 L846.0,178.7 L847.5,177.6 L849.0,178.4 L850.5,178.3 L852.0,176.4 L853.5,177.5 L855.0,178.7 L856.5,179.3 L858.0,178.9 L859.5,179.4 L861.0,179.7 L862.5,180.1 L864.0,179.8 L865.5,179.8 L867.0,180.2 L868.5,181.3 L870.0,180.8 L871.5,181.0 L873.0,181.9 L874.5,181.8 L876.0,182.4 L877.5,182.4 L879.0,182.6 L880.5,182.7 L882.0,182.3 L883.5,181.0 L885.0,181.8 L886.5,184.1 L888.0,182.7 L889.5,184.7 L891.0,184.2 L892.5,182.4 L894.0,181.8 L895.5,181.7 L897.0,180.1 L898.5,180.4 L900.0,179.0 L901.5,176.8 L903.0,179.0 L904.5,178.7 L906.0,176.8 L907.5,178.0 L909.0,177.2 L910.5,177.0 L911.6,177.4" fill="none" stroke="#3f8c2c" stroke-width="1.15" stroke-linejoin="round"/>
<line x1="912" y1="177.4" x2="949" y2="177.4" stroke="#3f8c2c" stroke-width="1.15" stroke-dasharray="2.4 1.87"/>
<path d="M51.0,419.0 L54.0,419.0 L54.0,368.0 L182.8,368.0 L182.8,419.0 L322.8,419.0 L322.8,368.0 L468.0,368.0 L468.0,419.0 L601.0,419.0 L601.0,368.0 L720.8,368.0 L720.8,419.0 L887.8,419.0 L887.8,368.0 L949.0,368.0" fill="none" stroke="#7dd6a3" stroke-width="1.25"/>
<path d="M51.0,389.0 L53.0,381.0 L55.6,376.0 L58.8,371.5 L63.4,366.6 L66.5,368.0 L71.2,369.4 L74.4,374.0 L80.6,386.6 L86.9,395.8 L181.6,395.8 L182.6,400.0 L184.3,419.0 M296.0,419.0 L300.0,416.0 L306.0,411.0 L310.0,409.0 L313.5,406.8 L315.4,404.5 L316.5,400.0 L318.4,390.0 L321.0,383.0 L323.4,376.0 L324.2,378.5 L326.4,369.5 L329.0,364.8 L333.8,363.2 L335.0,365.4 L340.0,366.4 L346.0,372.8 L352.5,385.2 L358.8,395.8 L452.5,395.8 L466.5,398.0 L468.4,398.4 L469.4,419.0 M565.0,419.0 L572.0,416.5 L576.0,416.2 L577.0,413.0 L580.0,408.5 L583.0,405.5 L587.0,399.5 L590.0,395.0 L593.0,389.4 L596.0,387.4 L597.6,379.0 L601.0,371.0 L605.6,368.0 L609.0,366.6 L612.0,361.6 L618.0,360.2 L622.8,361.0 L627.5,368.0 L633.8,380.4 L640.0,395.8 L718.4,395.8 L722.6,419.0 M848.0,419.0 L855.6,417.4 L862.0,414.2 L868.0,405.5 L874.4,397.5 L880.6,384.4 L885.3,371.4 L888.0,365.0 L890.0,358.0 L891.6,366.2 L894.7,358.0 L897.8,357.0 L901.0,360.0 L904.0,361.4 L908.0,366.4 L912.0,374.0 L915.0,377.7" fill="none" stroke="#ead05c" stroke-width="1.2" stroke-linejoin="round"/>
<path d="M51.0,384.7 L52.5,381.0 L54.0,378.0 L55.6,375.3 L56.4,377.0 L57.5,372.0 L58.8,370.6 L59.6,373.0 L60.6,368.5 L61.6,370.5 L63.4,366.0 L64.6,366.4 L66.5,368.0 L68.5,368.2 L71.2,369.0 L72.8,371.0 L74.4,373.8 L76.0,377.0 L77.5,380.0 L79.0,382.6 L80.6,386.2 L82.0,388.4 L83.6,390.5 L85.2,393.5 L86.9,395.6 L180.2,395.6 L183.9,419.0 M294.7,419.0 L297.0,417.0 L299.4,415.0 L302.0,413.5 L304.0,411.0 L306.5,409.5 L308.8,408.0 L311.0,406.0 L313.0,404.5 L315.0,402.0 L316.5,396.0 L318.0,389.4 L320.0,383.0 L322.8,375.3 L324.5,371.0 L326.0,369.0 L327.2,370.5 L329.0,364.4 L331.0,363.0 L333.8,362.8 L337.0,364.0 L340.0,366.0 L343.0,368.8 L346.0,372.4 L347.5,376.0 L349.5,378.0 L352.5,385.0 L355.5,390.5 L358.8,395.6 L452.5,395.6 L468.0,419.0 M563.4,419.0 L564.7,417.9 L566.8,415.1 L568.2,415.8 L568.9,417.2 L571.0,417.2 L573.8,414.4 L576.5,413.8 L577.9,411.7 L580.0,412.4 L580.7,408.9 L582.8,404.7 L585.6,398.5 L587.6,397.5 L589.7,393.6 L591.4,388.8 L593.2,388.3 L595.3,387.4 L596.7,383.9 L598.0,377.6 L600.1,376.2 L600.8,371.4 L602.9,370.0 L605.0,369.3 L607.8,367.9 L608.5,364.4 L610.6,363.0 L612.6,361.4 L614.7,361.9 L617.5,360.3 L620.3,361.0 L623.0,360.0 L624.4,363.8 L627.2,366.5 L630.0,371.4 L632.8,376.9 L635.6,383.2 L638.3,390.8 L640.4,395.6 L718.0,395.6 L722.0,419.0 M846.0,419.0 L851.0,418.4 L855.6,417.0 L857.4,415.4 L859.6,415.8 L862.0,413.8 L864.4,410.4 L866.0,409.6 L868.0,405.0 L870.4,402.0 L872.4,400.4 L874.4,397.0 L876.4,392.0 L878.6,388.4 L880.6,383.0 L882.0,379.0 L883.6,376.0 L885.3,370.6 L887.0,366.5 L888.6,361.0 L890.0,357.5 L891.6,366.0 L892.8,360.0 L894.7,357.5 L896.4,356.4 L897.8,356.6 L899.5,358.4 L901.0,359.7 L902.4,359.4 L904.0,361.0 L906.0,363.4 L908.0,366.0 L910.0,369.6 L912.0,373.8 L913.6,376.0 L915.0,377.5" fill="none" stroke="#4a4cb6" stroke-width="1.65" stroke-linejoin="round"/>
<line x1="914.4" y1="377.5" x2="949" y2="377.5" stroke="#4a4cb6" stroke-width="1.5" stroke-dasharray="2.9 2.1"/>
<line x1="51" y1="418.7" x2="949" y2="418.7" stroke="#7ceae6" stroke-width="1.7"/>
</svg>
<div style="position:absolute;font-size:5.9px;line-height:7px;color:#1c1c28;white-space:pre;-webkit-text-stroke:0.12px #1c1c28;left:0;width:23.3px;text-align:right;top:265.0px;color:#141c5c;-webkit-text-stroke-color:#141c5c">100.0</div>
<div style="position:absolute;font-size:5.9px;line-height:7px;color:#1c1c28;white-space:pre;-webkit-text-stroke:0.12px #1c1c28;left:0;width:23.3px;text-align:right;top:275.1px;color:#141c5c;-webkit-text-stroke-color:#141c5c">93.2</div>
<div style="position:absolute;font-size:5.9px;line-height:7px;color:#1c1c28;white-space:pre;-webkit-text-stroke:0.12px #1c1c28;left:0;width:23.3px;text-align:right;top:285.3px;color:#141c5c;-webkit-text-stroke-color:#141c5c">86.5</div>
<div style="position:absolute;font-size:5.9px;line-height:7px;color:#1c1c28;white-space:pre;-webkit-text-stroke:0.12px #1c1c28;left:0;width:23.3px;text-align:right;top:295.4px;color:#141c5c;-webkit-text-stroke-color:#141c5c">79.9</div>
<div style="position:absolute;font-size:5.9px;line-height:7px;color:#1c1c28;white-space:pre;-webkit-text-stroke:0.12px #1c1c28;left:0;width:23.3px;text-align:right;top:305.6px;color:#141c5c;-webkit-text-stroke-color:#141c5c">73.2</div>
<div style="position:absolute;font-size:5.9px;line-height:7px;color:#1c1c28;white-space:pre;-webkit-text-stroke:0.12px #1c1c28;left:0;width:23.3px;text-align:right;top:315.8px;color:#141c5c;-webkit-text-stroke-color:#141c5c">66.6</div>
<div style="position:absolute;font-size:5.9px;line-height:7px;color:#1c1c28;white-space:pre;-webkit-text-stroke:0.12px #1c1c28;left:0;width:23.3px;text-align:right;top:325.9px;color:#141c5c;-webkit-text-stroke-color:#141c5c">59.9</div>
<div style="position:absolute;font-size:5.9px;line-height:7px;color:#1c1c28;white-space:pre;-webkit-text-stroke:0.12px #1c1c28;left:0;width:23.3px;text-align:right;top:336.1px;color:#141c5c;-webkit-text-stroke-color:#141c5c">53.2</div>
<div style="position:absolute;font-size:5.9px;line-height:7px;color:#1c1c28;white-space:pre;-webkit-text-stroke:0.12px #1c1c28;left:0;width:23.3px;text-align:right;top:346.2px;color:#141c5c;-webkit-text-stroke-color:#141c5c">46.6</div>
<div style="position:absolute;font-size:5.9px;line-height:7px;color:#1c1c28;white-space:pre;-webkit-text-stroke:0.12px #1c1c28;left:0;width:23.3px;text-align:right;top:356.4px;color:#141c5c;-webkit-text-stroke-color:#141c5c">39.9</div>
<div style="position:absolute;font-size:5.9px;line-height:7px;color:#1c1c28;white-space:pre;-webkit-text-stroke:0.12px #1c1c28;left:0;width:23.3px;text-align:right;top:366.5px;color:#141c5c;-webkit-text-stroke-color:#141c5c">33.3</div>
<div style="position:absolute;font-size:5.9px;line-height:7px;color:#1c1c28;white-space:pre;-webkit-text-stroke:0.12px #1c1c28;left:0;width:23.3px;text-align:right;top:376.6px;color:#141c5c;-webkit-text-stroke-color:#141c5c">26.6</div>
<div style="position:absolute;font-size:5.9px;line-height:7px;color:#1c1c28;white-space:pre;-webkit-text-stroke:0.12px #1c1c28;left:0;width:23.3px;text-align:right;top:386.8px;color:#141c5c;-webkit-text-stroke-color:#141c5c">20.0</div>
<div style="position:absolute;font-size:5.9px;line-height:7px;color:#1c1c28;white-space:pre;-webkit-text-stroke:0.12px #1c1c28;left:0;width:23.3px;text-align:right;top:397.0px;color:#141c5c;-webkit-text-stroke-color:#141c5c">13.3</div>
<div style="position:absolute;font-size:5.9px;line-height:7px;color:#1c1c28;white-space:pre;-webkit-text-stroke:0.12px #1c1c28;left:0;width:23.3px;text-align:right;top:407.1px;color:#141c5c;-webkit-text-stroke-color:#141c5c">6.7</div>
<div style="position:absolute;font-size:5.9px;line-height:7px;color:#1c1c28;white-space:pre;-webkit-text-stroke:0.12px #1c1c28;left:0;width:23.3px;text-align:right;top:417.2px;color:#141c5c;-webkit-text-stroke-color:#141c5c">0.0</div>
<div style="position:absolute;font-size:5.9px;line-height:7px;color:#1c1c28;white-space:pre;-webkit-text-stroke:0.12px #1c1c28;left:30px;width:20px;text-align:right;top:265.0px;color:#0f4c58;-webkit-text-stroke-color:#0f4c58">3</div>
<div style="position:absolute;font-size:5.9px;line-height:7px;color:#1c1c28;white-space:pre;-webkit-text-stroke:0.12px #1c1c28;left:30px;width:20px;text-align:right;top:315.7px;color:#0f4c58;-webkit-text-stroke-color:#0f4c58">2</div>
<div style="position:absolute;font-size:5.9px;line-height:7px;color:#1c1c28;white-space:pre;-webkit-text-stroke:0.12px #1c1c28;left:30px;width:20px;text-align:right;top:366.4px;color:#0f4c58;-webkit-text-stroke-color:#0f4c58">1</div>
<div style="position:absolute;font-size:5.9px;line-height:7px;color:#1c1c28;white-space:pre;-webkit-text-stroke:0.12px #1c1c28;left:30px;width:20px;text-align:right;top:417.2px;color:#0f4c58;-webkit-text-stroke-color:#0f4c58">0</div>
<div style="position:absolute;font-size:5.9px;line-height:7px;color:#1c1c28;white-space:pre;-webkit-text-stroke:0.12px #1c1c28;left:950.2px;top:107.8px">100.0</div>
<div style="position:absolute;font-size:5.9px;line-height:7px;color:#1c1c28;white-space:pre;-webkit-text-stroke:0.12px #1c1c28;left:993px;top:107.8px">100.0</div>
<div style="position:absolute;font-size:5.9px;line-height:7px;color:#1c1c28;white-space:pre;-webkit-text-stroke:0.12px #1c1c28;left:950.2px;top:118.0px">93.3</div>
<div style="position:absolute;font-size:5.9px;line-height:7px;color:#1c1c28;white-space:pre;-webkit-text-stroke:0.12px #1c1c28;left:993px;top:118.0px">93.3</div>
<div style="position:absolute;font-size:5.9px;line-height:7px;color:#1c1c28;white-space:pre;-webkit-text-stroke:0.12px #1c1c28;left:950.2px;top:128.1px">86.6</div>
<div style="position:absolute;font-size:5.9px;line-height:7px;color:#1c1c28;white-space:pre;-webkit-text-stroke:0.12px #1c1c28;left:993px;top:128.1px">86.6</div>
<div style="position:absolute;font-size:5.9px;line-height:7px;color:#1c1c28;white-space:pre;-webkit-text-stroke:0.12px #1c1c28;left:950.2px;top:138.2px">80.0</div>
<div style="position:absolute;font-size:5.9px;line-height:7px;color:#1c1c28;white-space:pre;-webkit-text-stroke:0.12px #1c1c28;left:993px;top:138.2px">80.0</div>
<div style="position:absolute;font-size:5.9px;line-height:7px;color:#1c1c28;white-space:pre;-webkit-text-stroke:0.12px #1c1c28;left:950.2px;top:148.4px">73.3</div>
<div style="position:absolute;font-size:5.9px;line-height:7px;color:#1c1c28;white-space:pre;-webkit-text-stroke:0.12px #1c1c28;left:993px;top:148.4px">73.3</div>
<div style="position:absolute;font-size:5.9px;line-height:7px;color:#1c1c28;white-space:pre;-webkit-text-stroke:0.12px #1c1c28;left:950.2px;top:158.5px">66.6</div>
<div style="position:absolute;font-size:5.9px;line-height:7px;color:#1c1c28;white-space:pre;-webkit-text-stroke:0.12px #1c1c28;left:993px;top:158.5px">66.6</div>
<div style="position:absolute;font-size:5.9px;line-height:7px;color:#1c1c28;white-space:pre;-webkit-text-stroke:0.12px #1c1c28;left:950.2px;top:168.7px">59.9</div>
<div style="position:absolute;font-size:5.9px;line-height:7px;color:#1c1c28;white-space:pre;-webkit-text-stroke:0.12px #1c1c28;left:993px;top:168.7px">59.9</div>
<div style="position:absolute;font-size:5.9px;line-height:7px;color:#1c1c28;white-space:pre;-webkit-text-stroke:0.12px #1c1c28;left:950.2px;top:178.8px">53.3</div>
<div style="position:absolute;font-size:5.9px;line-height:7px;color:#1c1c28;white-space:pre;-webkit-text-stroke:0.12px #1c1c28;left:993px;top:178.8px">53.3</div>
<div style="position:absolute;font-size:5.9px;line-height:7px;color:#1c1c28;white-space:pre;-webkit-text-stroke:0.12px #1c1c28;left:950.2px;top:189.0px">46.6</div>
<div style="position:absolute;font-size:5.9px;line-height:7px;color:#1c1c28;white-space:pre;-webkit-text-stroke:0.12px #1c1c28;left:993px;top:189.0px">46.6</div>
<div style="position:absolute;font-size:5.9px;line-height:7px;color:#1c1c28;white-space:pre;-webkit-text-stroke:0.12px #1c1c28;left:950.2px;top:199.2px">39.9</div>
<div style="position:absolute;font-size:5.9px;line-height:7px;color:#1c1c28;white-space:pre;-webkit-text-stroke:0.12px #1c1c28;left:993px;top:199.2px">39.9</div>
<div style="position:absolute;font-size:5.9px;line-height:7px;color:#1c1c28;white-space:pre;-webkit-text-stroke:0.12px #1c1c28;left:950.2px;top:209.3px">33.2</div>
<div style="position:absolute;font-size:5.9px;line-height:7px;color:#1c1c28;white-space:pre;-webkit-text-stroke:0.12px #1c1c28;left:993px;top:209.3px">33.2</div>
<div style="position:absolute;font-size:5.9px;line-height:7px;color:#1c1c28;white-space:pre;-webkit-text-stroke:0.12px #1c1c28;left:950.2px;top:219.5px">26.5</div>
<div style="position:absolute;font-size:5.9px;line-height:7px;color:#1c1c28;white-space:pre;-webkit-text-stroke:0.12px #1c1c28;left:993px;top:219.5px">26.5</div>
<div style="position:absolute;font-size:5.9px;line-height:7px;color:#1c1c28;white-space:pre;-webkit-text-stroke:0.12px #1c1c28;left:950.2px;top:229.6px">19.9</div>
<div style="position:absolute;font-size:5.9px;line-height:7px;color:#1c1c28;white-space:pre;-webkit-text-stroke:0.12px #1c1c28;left:993px;top:229.6px">19.9</div>
<div style="position:absolute;font-size:5.9px;line-height:7px;color:#1c1c28;white-space:pre;-webkit-text-stroke:0.12px #1c1c28;left:950.2px;top:239.8px">13.2</div>
<div style="position:absolute;font-size:5.9px;line-height:7px;color:#1c1c28;white-space:pre;-webkit-text-stroke:0.12px #1c1c28;left:993px;top:239.8px">13.2</div>
<div style="position:absolute;font-size:5.9px;line-height:7px;color:#1c1c28;white-space:pre;-webkit-text-stroke:0.12px #1c1c28;left:950.2px;top:249.9px">6.5</div>
<div style="position:absolute;font-size:5.9px;line-height:7px;color:#1c1c28;white-space:pre;-webkit-text-stroke:0.12px #1c1c28;left:993px;top:249.9px">6.5</div>
<div style="position:absolute;font-size:5.9px;line-height:7px;color:#1c1c28;white-space:pre;-webkit-text-stroke:0.12px #1c1c28;left:950.2px;top:260.1px">0.0</div>
<div style="position:absolute;font-size:5.9px;line-height:7px;color:#1c1c28;white-space:pre;-webkit-text-stroke:0.12px #1c1c28;left:993px;top:260.1px">0.0</div>
<div style="position:absolute;font-size:5.9px;line-height:7px;color:#1c1c28;white-space:pre;-webkit-text-stroke:0.12px #1c1c28;left:2.6px;top:96.6px;font-weight:bold;font-size:5.4px">%</div>
<div style="position:absolute;font-size:5.9px;line-height:7px;color:#1c1c28;white-space:pre;-webkit-text-stroke:0.12px #1c1c28;left:24px;top:96.6px;font-weight:bold;font-size:5.4px">0=Aus, <span style="color:#aaa">...</span></div>
<div style="position:absolute;font-size:5.9px;line-height:7px;color:#1c1c28;white-space:pre;-webkit-text-stroke:0.12px #1c1c28;left:992px;top:96.6px;font-weight:bold;font-size:5.4px">%</div>
<div style="position:absolute;font-size:5.9px;line-height:7px;color:#1c1c28;white-space:pre;-webkit-text-stroke:0.12px #1c1c28;left:31.0px;width:40px;text-align:center;top:425.6px;color:#1e1e1e;-webkit-text-stroke:0">13:48:49</div>
<div style="position:absolute;font-size:5.9px;line-height:7px;color:#1c1c28;white-space:pre;-webkit-text-stroke:0.12px #1c1c28;left:61.0px;width:40px;text-align:center;top:425.6px;color:#1e1e1e;-webkit-text-stroke:0">13:50:49</div>
<div style="position:absolute;font-size:5.9px;line-height:7px;color:#1c1c28;white-space:pre;-webkit-text-stroke:0.12px #1c1c28;left:90.9px;width:40px;text-align:center;top:425.6px;color:#1e1e1e;-webkit-text-stroke:0">13:52:49</div>
<div style="position:absolute;font-size:5.9px;line-height:7px;color:#1c1c28;white-space:pre;-webkit-text-stroke:0.12px #1c1c28;left:120.8px;width:40px;text-align:center;top:425.6px;color:#1e1e1e;-webkit-text-stroke:0">13:54:49</div>
<div style="position:absolute;font-size:5.9px;line-height:7px;color:#1c1c28;white-space:pre;-webkit-text-stroke:0.12px #1c1c28;left:150.8px;width:40px;text-align:center;top:425.6px;color:#1e1e1e;-webkit-text-stroke:0">13:56:49</div>
<div style="position:absolute;font-size:5.9px;line-height:7px;color:#1c1c28;white-space:pre;-webkit-text-stroke:0.12px #1c1c28;left:180.7px;width:40px;text-align:center;top:425.6px;color:#1e1e1e;-webkit-text-stroke:0">13:58:49</div>
<div style="position:absolute;font-size:5.9px;line-height:7px;color:#1c1c28;white-space:pre;-webkit-text-stroke:0.12px #1c1c28;left:210.6px;width:40px;text-align:center;top:425.6px;color:#1e1e1e;-webkit-text-stroke:0">14:00:49</div>
<div style="position:absolute;font-size:5.9px;line-height:7px;color:#1c1c28;white-space:pre;-webkit-text-stroke:0.12px #1c1c28;left:240.6px;width:40px;text-align:center;top:425.6px;color:#1e1e1e;-webkit-text-stroke:0">14:02:49</div>
<div style="position:absolute;font-size:5.9px;line-height:7px;color:#1c1c28;white-space:pre;-webkit-text-stroke:0.12px #1c1c28;left:270.5px;width:40px;text-align:center;top:425.6px;color:#1e1e1e;-webkit-text-stroke:0">14:04:49</div>
<div style="position:absolute;font-size:5.9px;line-height:7px;color:#1c1c28;white-space:pre;-webkit-text-stroke:0.12px #1c1c28;left:300.4px;width:40px;text-align:center;top:425.6px;color:#1e1e1e;-webkit-text-stroke:0">14:06:49</div>
<div style="position:absolute;font-size:5.9px;line-height:7px;color:#1c1c28;white-space:pre;-webkit-text-stroke:0.12px #1c1c28;left:330.4px;width:40px;text-align:center;top:425.6px;color:#1e1e1e;-webkit-text-stroke:0">14:08:49</div>
<div style="position:absolute;font-size:5.9px;line-height:7px;color:#1c1c28;white-space:pre;-webkit-text-stroke:0.12px #1c1c28;left:360.3px;width:40px;text-align:center;top:425.6px;color:#1e1e1e;-webkit-text-stroke:0">14:10:49</div>
<div style="position:absolute;font-size:5.9px;line-height:7px;color:#1c1c28;white-space:pre;-webkit-text-stroke:0.12px #1c1c28;left:390.2px;width:40px;text-align:center;top:425.6px;color:#1e1e1e;-webkit-text-stroke:0">14:12:49</div>
<div style="position:absolute;font-size:5.9px;line-height:7px;color:#1c1c28;white-space:pre;-webkit-text-stroke:0.12px #1c1c28;left:420.1px;width:40px;text-align:center;top:425.6px;color:#1e1e1e;-webkit-text-stroke:0">14:14:49</div>
<div style="position:absolute;font-size:5.9px;line-height:7px;color:#1c1c28;white-space:pre;-webkit-text-stroke:0.12px #1c1c28;left:450.1px;width:40px;text-align:center;top:425.6px;color:#1e1e1e;-webkit-text-stroke:0">14:16:49</div>
<div style="position:absolute;font-size:5.9px;line-height:7px;color:#1c1c28;white-space:pre;-webkit-text-stroke:0.12px #1c1c28;left:480.0px;width:40px;text-align:center;top:425.6px;color:#1e1e1e;-webkit-text-stroke:0">14:18:49</div>
<div style="position:absolute;font-size:5.9px;line-height:7px;color:#1c1c28;white-space:pre;-webkit-text-stroke:0.12px #1c1c28;left:509.9px;width:40px;text-align:center;top:425.6px;color:#1e1e1e;-webkit-text-stroke:0">14:20:49</div>
<div style="position:absolute;font-size:5.9px;line-height:7px;color:#1c1c28;white-space:pre;-webkit-text-stroke:0.12px #1c1c28;left:539.9px;width:40px;text-align:center;top:425.6px;color:#1e1e1e;-webkit-text-stroke:0">14:22:49</div>
<div style="position:absolute;font-size:5.9px;line-height:7px;color:#1c1c28;white-space:pre;-webkit-text-stroke:0.12px #1c1c28;left:569.8px;width:40px;text-align:center;top:425.6px;color:#1e1e1e;-webkit-text-stroke:0">14:24:49</div>
<div style="position:absolute;font-size:5.9px;line-height:7px;color:#1c1c28;white-space:pre;-webkit-text-stroke:0.12px #1c1c28;left:599.7px;width:40px;text-align:center;top:425.6px;color:#1e1e1e;-webkit-text-stroke:0">14:26:49</div>
<div style="position:absolute;font-size:5.9px;line-height:7px;color:#1c1c28;white-space:pre;-webkit-text-stroke:0.12px #1c1c28;left:629.6px;width:40px;text-align:center;top:425.6px;color:#1e1e1e;-webkit-text-stroke:0">14:28:49</div>
<div style="position:absolute;font-size:5.9px;line-height:7px;color:#1c1c28;white-space:pre;-webkit-text-stroke:0.12px #1c1c28;left:659.6px;width:40px;text-align:center;top:425.6px;color:#1e1e1e;-webkit-text-stroke:0">14:30:49</div>
<div style="position:absolute;font-size:5.9px;line-height:7px;color:#1c1c28;white-space:pre;-webkit-text-stroke:0.12px #1c1c28;left:689.5px;width:40px;text-align:center;top:425.6px;color:#1e1e1e;-webkit-text-stroke:0">14:32:49</div>
<div style="position:absolute;font-size:5.9px;line-height:7px;color:#1c1c28;white-space:pre;-webkit-text-stroke:0.12px #1c1c28;left:719.4px;width:40px;text-align:center;top:425.6px;color:#1e1e1e;-webkit-text-stroke:0">14:34:49</div>
<div style="position:absolute;font-size:5.9px;line-height:7px;color:#1c1c28;white-space:pre;-webkit-text-stroke:0.12px #1c1c28;left:749.4px;width:40px;text-align:center;top:425.6px;color:#1e1e1e;-webkit-text-stroke:0">14:36:49</div>
<div style="position:absolute;font-size:5.9px;line-height:7px;color:#1c1c28;white-space:pre;-webkit-text-stroke:0.12px #1c1c28;left:779.3px;width:40px;text-align:center;top:425.6px;color:#1e1e1e;-webkit-text-stroke:0">14:38:49</div>
<div style="position:absolute;font-size:5.9px;line-height:7px;color:#1c1c28;white-space:pre;-webkit-text-stroke:0.12px #1c1c28;left:809.2px;width:40px;text-align:center;top:425.6px;color:#1e1e1e;-webkit-text-stroke:0">14:40:49</div>
<div style="position:absolute;font-size:5.9px;line-height:7px;color:#1c1c28;white-space:pre;-webkit-text-stroke:0.12px #1c1c28;left:839.2px;width:40px;text-align:center;top:425.6px;color:#1e1e1e;-webkit-text-stroke:0">14:42:49</div>
<div style="position:absolute;font-size:5.9px;line-height:7px;color:#1c1c28;white-space:pre;-webkit-text-stroke:0.12px #1c1c28;left:869.1px;width:40px;text-align:center;top:425.6px;color:#1e1e1e;-webkit-text-stroke:0">14:44:49</div>
<div style="position:absolute;font-size:5.9px;line-height:7px;color:#1c1c28;white-space:pre;-webkit-text-stroke:0.12px #1c1c28;left:899.0px;width:40px;text-align:center;top:425.6px;color:#1e1e1e;-webkit-text-stroke:0">14:46:49</div>
<div style="position:absolute;font-size:5.9px;line-height:7px;color:#1c1c28;white-space:pre;-webkit-text-stroke:0.12px #1c1c28;left:928.2px;width:40px;text-align:center;top:425.6px;color:#1e1e1e;-webkit-text-stroke:0">14:48:49</div>
<div style="position:absolute;font-size:5.9px;line-height:7px;color:#1c1c28;white-space:pre;-webkit-text-stroke:0.12px #1c1c28;left:31.0px;width:40px;text-align:center;top:431.4px;color:#1e1e1e;-webkit-text-stroke:0">12.02.25</div>
<div style="position:absolute;font-size:5.9px;line-height:7px;color:#1c1c28;white-space:pre;-webkit-text-stroke:0.12px #1c1c28;left:928.0px;width:40px;text-align:center;top:431.4px;color:#1e1e1e;-webkit-text-stroke:0">12.02.25</div>
<div style="position:absolute;left:2.9px;top:448.2px;width:10.8px;height:10.4px;background:#e2e2e2;"></div>
<div style="position:absolute;left:15.6px;top:448.2px;width:11.4px;height:10.4px;background:#e2e2e2;"></div>
<div style="position:absolute;left:113.4px;top:448.2px;width:11.4px;height:10.4px;background:#e2e2e2;"></div>
<div style="position:absolute;left:126.2px;top:448.2px;width:11.4px;height:10.4px;background:#e2e2e2;"></div>
<div style="position:absolute;left:27.2px;top:448.2px;width:86px;height:10.4px;background:#fff;border:1px solid #e6e6e6;box-sizing:border-box"></div>
<div style="position:absolute;left:30.2px;top:451.2px;font-size:5.33px;line-height:7.33px;color:#b0b0b0;white-space:pre;">Zeitraum</div>
<svg style="position:absolute;left:0;top:440px" width="400" height="25" viewBox="0 440 400 25">
<path d="M11.6,450.4 L6,453.4 L11.6,456.4 Z" fill="#a4a4a4"/>
<path d="M24.4,450.4 L18.8,453.4 L24.4,456.4 Z" fill="#a4a4a4"/>
<path d="M116.2,450.4 L121.8,453.4 L116.2,456.4 Z" fill="#a4a4a4"/>
<path d="M129,450.4 L134.6,453.4 L129,456.4 Z" fill="#a4a4a4"/>
<path d="M105.6,452.4 L107.6,454.6 L109.6,452.4" fill="none" stroke="#9a9a9a" stroke-width="0.7"/>
</svg>
<div style="position:absolute;left:144.4px;top:448.2px;width:60.4px;height:10.4px;background:#fff;border:1px solid #ececec;box-sizing:border-box"></div>
<div style="position:absolute;left:221.6px;top:448.2px;width:60.4px;height:10.4px;background:#fff;border:1px solid #ececec;box-sizing:border-box"></div>
<div style="position:absolute;left:312.2px;top:448.2px;width:27.4px;height:10.4px;background:#fff;border:1px solid #ececec;box-sizing:border-box"></div>
<div style="position:absolute;left:342.2px;top:448.2px;width:45px;height:10.4px;background:#fff;border:1px solid #ececec;box-sizing:border-box"></div>
<svg style="position:absolute;left:370px;top:445px" width="20" height="16" viewBox="370 445 20 16"><path d="M380,452 L382.4,454.8 L384.8,452" fill="none" stroke="#111" stroke-width="1.15"/></svg>
<div style="position:absolute;left:147.2px;top:451.2px;font-size:5.25px;line-height:7.25px;color:#222;white-space:pre;">12.02.25 13:48:49</div>
<div style="position:absolute;left:212.4px;top:451.2px;font-size:5.33px;line-height:7.33px;color:#555;white-space:pre;">-</div>
<div style="position:absolute;left:224.4px;top:451.2px;font-size:5.25px;line-height:7.25px;color:#222;white-space:pre;">12.02.25 14:48:49</div>
<div style="position:absolute;left:285.6px;top:450.09999999999997px;font-size:6.4px;line-height:8.40px;color:#222;white-space:pre;">Intervall</div>
<div style="position:absolute;left:315px;top:451.2px;font-size:5.33px;line-height:7.33px;color:#222;white-space:pre;">1</div>
<div style="position:absolute;left:345.6px;top:451.2px;font-size:5.33px;line-height:7.33px;color:#333;white-space:pre;">Stunde(n)</div>
<div style="position:absolute;left:410.8px;top:448.2px;width:58.5px;height:10.4px;background:#e4e4e4;"></div>
<div style="position:absolute;left:410.8px;top:451.2px;width:58.5px;text-align:center;font-size:5.33px;line-height:7.33px;color:#b4b4b4;white-space:pre;">Aktualisieren</div>
<div style="position:absolute;left:952px;top:448.2px;width:69.3px;height:10.4px;background:#8fcbea;"></div>
<div style="position:absolute;left:952px;top:451.2px;width:69.3px;text-align:center;font-size:5.33px;line-height:7.33px;color:#16283a;white-space:pre;">Alle Kurven übereinander</div>
<div style="position:absolute;left:2.9px;top:465.1px;width:58.3px;height:10.6px;background:#e2e2e2;"></div>
<div style="position:absolute;left:2.9px;top:468.90000000000003px;width:58.3px;text-align:center;font-size:5.33px;line-height:7.33px;color:#222;white-space:pre;">Ganglinien Übersicht</div>
<div style="position:absolute;left:64.5px;top:465.1px;width:58.3px;height:10.6px;background:#e2e2e2;"></div>
<div style="position:absolute;left:64.5px;top:468.90000000000003px;width:58.3px;text-align:center;font-size:5.33px;line-height:7.33px;color:#222;white-space:pre;">Ganglinie hinzufügen</div>
<div style="position:absolute;left:125.3px;top:465.1px;width:58.3px;height:10.6px;background:#e2e2e2;"></div>
<div style="position:absolute;left:125.3px;top:468.90000000000003px;width:58.3px;text-align:center;font-size:5.33px;line-height:7.33px;color:#222;white-space:pre;">Konfiguration</div>
<div style="position:absolute;left:186.5px;top:465.1px;width:58.6px;height:10.6px;background:#e2e2e2;"></div>
<div style="position:absolute;left:186.5px;top:468.90000000000003px;width:58.6px;text-align:center;font-size:5.33px;line-height:7.33px;color:#222;white-space:pre;">Umwandlungstabellen</div>
<div style="position:absolute;left:248.4px;top:465.1px;width:63.2px;height:10.6px;background:#e2e2e2;"></div>
<div style="position:absolute;left:248.4px;top:468.90000000000003px;width:63.2px;text-align:center;font-size:5.33px;line-height:7.33px;color:#222;white-space:pre;">Konfiguration speichern</div>
<div style="position:absolute;left:320.2px;top:465.1px;width:58.4px;height:10.6px;background:#e2e2e2;"></div>
<div style="position:absolute;left:320.2px;top:468.90000000000003px;width:58.4px;text-align:center;font-size:5.33px;line-height:7.33px;color:#222;white-space:pre;">Live Daten DB</div>
<div style="position:absolute;left:381.6px;top:465.1px;width:58.4px;height:10.6px;background:#e2e2e2;"></div>
<div style="position:absolute;left:381.6px;top:468.90000000000003px;width:58.4px;text-align:center;font-size:5.33px;line-height:7.33px;color:#222;white-space:pre;">Live Daten DP</div>
<div style="position:absolute;left:443px;top:465.1px;width:58.3px;height:10.6px;background:#e2e2e2;"></div>
<div style="position:absolute;left:443px;top:468.90000000000003px;width:58.3px;text-align:center;font-size:5.33px;line-height:7.33px;color:#222;white-space:pre;">Aktuelle Zeit</div>
<div style="position:absolute;left:509px;top:465.1px;width:59px;height:10.6px;background:#e2e2e2;"></div>
<div style="position:absolute;left:509px;top:468.90000000000003px;width:59px;text-align:center;font-size:5.33px;line-height:7.33px;color:#222;white-space:pre;">Benutzer-Farben</div>
<div style="position:absolute;left:571px;top:465.1px;width:58.4px;height:10.6px;background:#e2e2e2;"></div>
<div style="position:absolute;left:571px;top:468.90000000000003px;width:58.4px;text-align:center;font-size:5.33px;line-height:7.33px;color:#222;white-space:pre;">Verschieben (F8)</div>
<div style="position:absolute;left:632.2px;top:465.1px;width:58.6px;height:10.6px;background:#e2e2e2;"></div>
<div style="position:absolute;left:632.2px;top:468.90000000000003px;width:58.6px;text-align:center;font-size:5.33px;line-height:7.33px;color:#222;white-space:pre;">Berechnung (F9)</div>
<div style="position:absolute;left:952px;top:465.1px;width:69.3px;height:10.6px;background:#e2e2e2;"></div>
<div style="position:absolute;left:952px;top:468.90000000000003px;width:69.3px;text-align:center;font-size:5.33px;line-height:7.33px;color:#222;white-space:pre;">Berechnung hinzufügen</div>
<div style="position:absolute;left:2.5px;top:479.3px;width:36.2px;height:11.5px;background:#e1e1e1;"></div>
<div style="position:absolute;left:2.5px;top:482.2px;width:36.2px;text-align:center;font-size:6.4px;line-height:8.40px;color:#222;white-space:pre;">Anzeigen</div>
<div style="position:absolute;left:40px;top:479.3px;width:41.5px;height:11.5px;background:#e1e1e1;"></div>
<div style="position:absolute;left:40px;top:482.2px;width:41.5px;text-align:center;font-size:6.4px;line-height:8.40px;color:#222;white-space:pre;">Bereich +/-</div>
<div style="position:absolute;left:83px;top:479.3px;width:35.5px;height:11.5px;background:#e1e1e1;"></div>
<div style="position:absolute;left:85.2px;top:482.2px;font-size:6.4px;line-height:8.40px;color:#222;white-space:pre;">Bereich</div>
<div style="position:absolute;left:120px;top:479.3px;width:217.4px;height:11.5px;background:#e1e1e1;"></div>
<div style="position:absolute;left:122.2px;top:482.2px;font-size:6.4px;line-height:8.40px;color:#222;white-space:pre;">Objekt</div>
<div style="position:absolute;left:338.6px;top:479.3px;width:347px;height:11.5px;background:#e1e1e1;"></div>
<div style="position:absolute;left:340.8px;top:482.2px;font-size:6.4px;line-height:8.40px;color:#222;white-space:pre;">Ganglinie</div>
<div style="position:absolute;left:686.7px;top:479.3px;width:88.8px;height:11.5px;background:#e1e1e1;"></div>
<div style="position:absolute;left:688.9000000000001px;top:482.2px;font-size:6.4px;line-height:8.40px;color:#222;white-space:pre;">RI Nr.</div>
<div style="position:absolute;left:776.8px;top:479.3px;width:90px;height:11.5px;background:#e1e1e1;"></div>
<div style="position:absolute;left:779.0px;top:482.2px;font-size:6.4px;line-height:8.40px;color:#222;white-space:pre;">Einheit</div>
<div style="position:absolute;left:868px;top:479.3px;width:47px;height:11.5px;background:#e1e1e1;"></div>
<div style="position:absolute;left:870.2px;top:482.2px;font-size:6.4px;line-height:8.40px;color:#222;white-space:pre;">Farbe</div>
<div style="position:absolute;left:916.6px;top:479.3px;width:46.5px;height:11.5px;background:#e1e1e1;"></div>
<div style="position:absolute;left:916.6px;top:482.2px;width:46.5px;text-align:center;font-size:6.4px;line-height:8.40px;color:#222;white-space:pre;">Berechnung</div>
<div style="position:absolute;left:964.4px;top:479.3px;width:46.6px;height:11.5px;background:#e1e1e1;"></div>
<div style="position:absolute;left:964.4px;top:482.2px;width:46.6px;text-align:center;font-size:6.4px;line-height:8.40px;color:#222;white-space:pre;">Alle entfernen</div>
<div style="position:absolute;left:1012.4px;top:479.3px;width:9.2px;height:11.5px;background:#e1e1e1;"></div>
<div style="position:absolute;left:2.5px;top:492.05px;width:36.2px;height:11.55px;background:#f0f0f0;"></div>
<div style="position:absolute;left:2.5px;top:495.05px;width:36.2px;text-align:center;font-size:6.4px;line-height:8.40px;color:#222;white-space:pre;">X</div>
<div style="position:absolute;left:40px;top:492.05px;width:19.6px;height:11.55px;background:#e4e4e4;"></div>
<div style="position:absolute;left:40px;top:495.05px;width:19.6px;text-align:center;font-size:6.4px;line-height:8.40px;color:#222;white-space:pre;">+</div>
<div style="position:absolute;left:61.4px;top:492.05px;width:20.1px;height:11.55px;background:#e4e4e4;"></div>
<div style="position:absolute;left:61.4px;top:495.05px;width:20.1px;text-align:center;font-size:6.4px;line-height:8.40px;color:#222;white-space:pre;">-</div>
<div style="position:absolute;left:83px;top:492.05px;width:35.5px;height:11.55px;background:#f0f0f0;"></div>
<div style="position:absolute;left:85.2px;top:495.05px;font-size:6.4px;line-height:8.40px;color:#222;white-space:pre;">1</div>
<div style="position:absolute;left:120px;top:492.05px;width:217.4px;height:11.55px;background:#f0f0f0;"></div>
<div style="position:absolute;left:122.2px;top:495.05px;font-size:6.4px;line-height:8.40px;color:#222;white-space:pre;"></div>
<div style="position:absolute;left:338.6px;top:492.05px;width:347px;height:11.55px;background:#f0f0f0;"></div>
<div style="position:absolute;left:341px;top:495.05px;font-size:6.4px;line-height:8.40px;color:#4a22c8;white-space:pre;">Sicherheitsabschaltung Niveau tief</div>
<div style="position:absolute;left:686.7px;top:492.05px;width:88.8px;height:11.55px;background:#f0f0f0;"></div>
<div style="position:absolute;left:689.2px;top:495.05px;font-size:6.4px;line-height:8.40px;color:#222;white-space:pre;"></div>
<div style="position:absolute;left:776.8px;top:492.05px;width:90px;height:11.55px;background:#f0f0f0;"></div>
<div style="position:absolute;left:779.4px;top:495.05px;font-size:6.4px;line-height:8.40px;color:#222;white-space:pre;"></div>
<div style="position:absolute;left:868px;top:492.05px;width:47px;height:11.55px;background:#f03a22;"></div>
<div style="position:absolute;left:916.6px;top:492.05px;width:46.5px;height:11.55px;background:#e4e4e4;"></div>
<div style="position:absolute;left:916.6px;top:495.05px;width:46.5px;text-align:center;font-size:6.4px;line-height:8.40px;color:#4a22c8;white-space:pre;">Formel</div>
<div style="position:absolute;left:964.4px;top:492.05px;width:46.6px;height:11.55px;background:#e4e4e4;"></div>
<div style="position:absolute;left:964.4px;top:495.05px;width:46.6px;text-align:center;font-size:6.4px;line-height:8.40px;color:#222;white-space:pre;">Entfernen</div>
<div style="position:absolute;left:2.5px;top:504.88px;width:36.2px;height:11.55px;background:#fbfbfb;"></div>
<div style="position:absolute;left:2.5px;top:507.88px;width:36.2px;text-align:center;font-size:6.4px;line-height:8.40px;color:#222;white-space:pre;">X</div>
<div style="position:absolute;left:40px;top:504.88px;width:19.6px;height:11.55px;background:#e4e4e4;"></div>
<div style="position:absolute;left:40px;top:507.88px;width:19.6px;text-align:center;font-size:6.4px;line-height:8.40px;color:#222;white-space:pre;">+</div>
<div style="position:absolute;left:61.4px;top:504.88px;width:20.1px;height:11.55px;background:#e4e4e4;"></div>
<div style="position:absolute;left:61.4px;top:507.88px;width:20.1px;text-align:center;font-size:6.4px;line-height:8.40px;color:#222;white-space:pre;">-</div>
<div style="position:absolute;left:83px;top:504.88px;width:35.5px;height:11.55px;background:#fbfbfb;"></div>
<div style="position:absolute;left:85.2px;top:507.88px;font-size:6.4px;line-height:8.40px;color:#222;white-space:pre;">1</div>
<div style="position:absolute;left:120px;top:504.88px;width:217.4px;height:11.55px;background:#fbfbfb;"></div>
<div style="position:absolute;left:122.2px;top:507.88px;font-size:6.4px;line-height:8.40px;color:#222;white-space:pre;">Gamsen SSE Dampfkessel 6; Dampfkessel 6</div>
<div style="position:absolute;left:338.6px;top:504.88px;width:347px;height:11.55px;background:#fbfbfb;"></div>
<div style="position:absolute;left:341px;top:507.88px;font-size:6.4px;line-height:8.40px;color:#222;white-space:pre;">Dampfkessel, Niveau</div>
<div style="position:absolute;left:686.7px;top:504.88px;width:88.8px;height:11.55px;background:#fbfbfb;"></div>
<div style="position:absolute;left:689.2px;top:507.88px;font-size:6.4px;line-height:8.40px;color:#222;white-space:pre;">311 12 12</div>
<div style="position:absolute;left:776.8px;top:504.88px;width:90px;height:11.55px;background:#fbfbfb;"></div>
<div style="position:absolute;left:779.4px;top:507.88px;font-size:6.4px;line-height:8.40px;color:#222;white-space:pre;">%</div>
<div style="position:absolute;left:868px;top:504.88px;width:47px;height:11.55px;background:#3a8fd6;"></div>
<div style="position:absolute;left:916.6px;top:504.88px;width:46.5px;height:11.55px;background:#e4e4e4;"></div>
<div style="position:absolute;left:964.4px;top:504.88px;width:46.6px;height:11.55px;background:#e4e4e4;"></div>
<div style="position:absolute;left:964.4px;top:507.88px;width:46.6px;text-align:center;font-size:6.4px;line-height:8.40px;color:#222;white-space:pre;">Entfernen</div>
<div style="position:absolute;left:2.5px;top:517.71px;width:36.2px;height:11.55px;background:#f0f0f0;"></div>
<div style="position:absolute;left:2.5px;top:520.71px;width:36.2px;text-align:center;font-size:6.4px;line-height:8.40px;color:#222;white-space:pre;">X</div>
<div style="position:absolute;left:40px;top:517.71px;width:19.6px;height:11.55px;background:#e4e4e4;"></div>
<div style="position:absolute;left:40px;top:520.71px;width:19.6px;text-align:center;font-size:6.4px;line-height:8.40px;color:#222;white-space:pre;">+</div>
<div style="position:absolute;left:61.4px;top:517.71px;width:20.1px;height:11.55px;background:#e4e4e4;"></div>
<div style="position:absolute;left:61.4px;top:520.71px;width:20.1px;text-align:center;font-size:6.4px;line-height:8.40px;color:#222;white-space:pre;">-</div>
<div style="position:absolute;left:83px;top:517.71px;width:35.5px;height:11.55px;background:#f0f0f0;"></div>
<div style="position:absolute;left:85.2px;top:520.71px;font-size:6.4px;line-height:8.40px;color:#222;white-space:pre;">1</div>
<div style="position:absolute;left:120px;top:517.71px;width:217.4px;height:11.55px;background:#f0f0f0;"></div>
<div style="position:absolute;left:122.2px;top:520.71px;font-size:6.4px;line-height:8.40px;color:#222;white-space:pre;">Gamsen SSE Dampfkessel 6; Dampfkessel 6</div>
<div style="position:absolute;left:338.6px;top:517.71px;width:347px;height:11.55px;background:#f0f0f0;"></div>
<div style="position:absolute;left:341px;top:520.71px;font-size:6.4px;line-height:8.40px;color:#222;white-space:pre;">Sicherheitsniveau 1 Kessel</div>
<div style="position:absolute;left:686.7px;top:517.71px;width:88.8px;height:11.55px;background:#f0f0f0;"></div>
<div style="position:absolute;left:689.2px;top:520.71px;font-size:6.4px;line-height:8.40px;color:#222;white-space:pre;">311 12 01</div>
<div style="position:absolute;left:776.8px;top:517.71px;width:90px;height:11.55px;background:#f0f0f0;"></div>
<div style="position:absolute;left:779.4px;top:520.71px;font-size:6.4px;line-height:8.40px;color:#222;white-space:pre;">%</div>
<div style="position:absolute;left:868px;top:517.71px;width:47px;height:11.55px;background:#a0204e;"></div>
<div style="position:absolute;left:916.6px;top:517.71px;width:46.5px;height:11.55px;background:#e4e4e4;"></div>
<div style="position:absolute;left:964.4px;top:517.71px;width:46.6px;height:11.55px;background:#e4e4e4;"></div>
<div style="position:absolute;left:964.4px;top:520.71px;width:46.6px;text-align:center;font-size:6.4px;line-height:8.40px;color:#222;white-space:pre;">Entfernen</div>
<div style="position:absolute;left:2.5px;top:530.54px;width:36.2px;height:11.55px;background:#fbfbfb;"></div>
<div style="position:absolute;left:2.5px;top:533.54px;width:36.2px;text-align:center;font-size:6.4px;line-height:8.40px;color:#222;white-space:pre;">X</div>
<div style="position:absolute;left:40px;top:530.54px;width:19.6px;height:11.55px;background:#e4e4e4;"></div>
<div style="position:absolute;left:40px;top:533.54px;width:19.6px;text-align:center;font-size:6.4px;line-height:8.40px;color:#222;white-space:pre;">+</div>
<div style="position:absolute;left:61.4px;top:530.54px;width:20.1px;height:11.55px;background:#e4e4e4;"></div>
<div style="position:absolute;left:61.4px;top:533.54px;width:20.1px;text-align:center;font-size:6.4px;line-height:8.40px;color:#222;white-space:pre;">-</div>
<div style="position:absolute;left:83px;top:530.54px;width:35.5px;height:11.55px;background:#fbfbfb;"></div>
<div style="position:absolute;left:85.2px;top:533.54px;font-size:6.4px;line-height:8.40px;color:#222;white-space:pre;">1</div>
<div style="position:absolute;left:120px;top:530.54px;width:217.4px;height:11.55px;background:#fbfbfb;"></div>
<div style="position:absolute;left:122.2px;top:533.54px;font-size:6.4px;line-height:8.40px;color:#222;white-space:pre;">Gamsen SSE Dampfkessel 6; Dampfkessel 6</div>
<div style="position:absolute;left:338.6px;top:530.54px;width:347px;height:11.55px;background:#fbfbfb;"></div>
<div style="position:absolute;left:341px;top:533.54px;font-size:6.4px;line-height:8.40px;color:#222;white-space:pre;">Sicherheitsniveau 2 Kessel</div>
<div style="position:absolute;left:686.7px;top:530.54px;width:88.8px;height:11.55px;background:#fbfbfb;"></div>
<div style="position:absolute;left:689.2px;top:533.54px;font-size:6.4px;line-height:8.40px;color:#222;white-space:pre;">311 12 02</div>
<div style="position:absolute;left:776.8px;top:530.54px;width:90px;height:11.55px;background:#fbfbfb;"></div>
<div style="position:absolute;left:779.4px;top:533.54px;font-size:6.4px;line-height:8.40px;color:#222;white-space:pre;">%</div>
<div style="position:absolute;left:868px;top:530.54px;width:47px;height:11.55px;background:#2a8a1c;"></div>
<div style="position:absolute;left:916.6px;top:530.54px;width:46.5px;height:11.55px;background:#e4e4e4;"></div>
<div style="position:absolute;left:964.4px;top:530.54px;width:46.6px;height:11.55px;background:#e4e4e4;"></div>
<div style="position:absolute;left:964.4px;top:533.54px;width:46.6px;text-align:center;font-size:6.4px;line-height:8.40px;color:#222;white-space:pre;">Entfernen</div>
<div style="position:absolute;left:2.5px;top:543.37px;width:36.2px;height:11.55px;background:#f0f0f0;"></div>
<div style="position:absolute;left:2.5px;top:546.37px;width:36.2px;text-align:center;font-size:6.4px;line-height:8.40px;color:#222;white-space:pre;">X</div>
<div style="position:absolute;left:40px;top:543.37px;width:19.6px;height:11.55px;background:#e4e4e4;"></div>
<div style="position:absolute;left:40px;top:546.37px;width:19.6px;text-align:center;font-size:6.4px;line-height:8.40px;color:#222;white-space:pre;">+</div>
<div style="position:absolute;left:61.4px;top:543.37px;width:20.1px;height:11.55px;background:#e4e4e4;"></div>
<div style="position:absolute;left:61.4px;top:546.37px;width:20.1px;text-align:center;font-size:6.4px;line-height:8.40px;color:#222;white-space:pre;">-</div>
<div style="position:absolute;left:83px;top:543.37px;width:35.5px;height:11.55px;background:#f0f0f0;"></div>
<div style="position:absolute;left:85.2px;top:546.37px;font-size:6.4px;line-height:8.40px;color:#222;white-space:pre;">1</div>
<div style="position:absolute;left:120px;top:543.37px;width:217.4px;height:11.55px;background:#f0f0f0;"></div>
<div style="position:absolute;left:122.2px;top:546.37px;font-size:6.4px;line-height:8.40px;color:#222;white-space:pre;"></div>
<div style="position:absolute;left:338.6px;top:543.37px;width:347px;height:11.55px;background:#f0f0f0;"></div>
<div style="position:absolute;left:341px;top:546.37px;font-size:6.4px;line-height:8.40px;color:#4a22c8;white-space:pre;">Sicherheitsabschaltung Niveau hoch</div>
<div style="position:absolute;left:686.7px;top:543.37px;width:88.8px;height:11.55px;background:#f0f0f0;"></div>
<div style="position:absolute;left:689.2px;top:546.37px;font-size:6.4px;line-height:8.40px;color:#222;white-space:pre;"></div>
<div style="position:absolute;left:776.8px;top:543.37px;width:90px;height:11.55px;background:#f0f0f0;"></div>
<div style="position:absolute;left:779.4px;top:546.37px;font-size:6.4px;line-height:8.40px;color:#222;white-space:pre;"></div>
<div style="position:absolute;left:868px;top:543.37px;width:47px;height:11.55px;background:#f0281c;"></div>
<div style="position:absolute;left:916.6px;top:543.37px;width:46.5px;height:11.55px;background:#e4e4e4;"></div>
<div style="position:absolute;left:916.6px;top:546.37px;width:46.5px;text-align:center;font-size:6.4px;line-height:8.40px;color:#4a22c8;white-space:pre;">Formel</div>
<div style="position:absolute;left:964.4px;top:543.37px;width:46.6px;height:11.55px;background:#e4e4e4;"></div>
<div style="position:absolute;left:964.4px;top:546.37px;width:46.6px;text-align:center;font-size:6.4px;line-height:8.40px;color:#222;white-space:pre;">Entfernen</div>
<div style="position:absolute;left:2.5px;top:556.2px;width:36.2px;height:11.55px;background:#fbfbfb;"></div>
<div style="position:absolute;left:2.5px;top:559.2px;width:36.2px;text-align:center;font-size:6.4px;line-height:8.40px;color:#222;white-space:pre;">X</div>
<div style="position:absolute;left:40px;top:556.2px;width:19.6px;height:11.55px;background:#e4e4e4;"></div>
<div style="position:absolute;left:40px;top:559.2px;width:19.6px;text-align:center;font-size:6.4px;line-height:8.40px;color:#222;white-space:pre;">+</div>
<div style="position:absolute;left:61.4px;top:556.2px;width:20.1px;height:11.55px;background:#e4e4e4;"></div>
<div style="position:absolute;left:61.4px;top:559.2px;width:20.1px;text-align:center;font-size:6.4px;line-height:8.40px;color:#222;white-space:pre;">-</div>
<div style="position:absolute;left:83px;top:556.2px;width:35.5px;height:11.55px;background:#fbfbfb;"></div>
<div style="position:absolute;left:85.2px;top:559.2px;font-size:6.4px;line-height:8.40px;color:#222;white-space:pre;">1</div>
<div style="position:absolute;left:120px;top:556.2px;width:217.4px;height:11.55px;background:#fbfbfb;"></div>
<div style="position:absolute;left:122.2px;top:559.2px;font-size:6.4px;line-height:8.40px;color:#222;white-space:pre;"></div>
<div style="position:absolute;left:338.6px;top:556.2px;width:347px;height:11.55px;background:#fbfbfb;"></div>
<div style="position:absolute;left:341px;top:559.2px;font-size:6.4px;line-height:8.40px;color:#4a22c8;white-space:pre;">Voralarm Niveau hoch</div>
<div style="position:absolute;left:686.7px;top:556.2px;width:88.8px;height:11.55px;background:#fbfbfb;"></div>
<div style="position:absolute;left:689.2px;top:559.2px;font-size:6.4px;line-height:8.40px;color:#222;white-space:pre;"></div>
<div style="position:absolute;left:776.8px;top:556.2px;width:90px;height:11.55px;background:#fbfbfb;"></div>
<div style="position:absolute;left:779.4px;top:559.2px;font-size:6.4px;line-height:8.40px;color:#222;white-space:pre;"></div>
<div style="position:absolute;left:868px;top:556.2px;width:47px;height:11.55px;background:#f5861e;"></div>
<div style="position:absolute;left:916.6px;top:556.2px;width:46.5px;height:11.55px;background:#e4e4e4;"></div>
<div style="position:absolute;left:916.6px;top:559.2px;width:46.5px;text-align:center;font-size:6.4px;line-height:8.40px;color:#4a22c8;white-space:pre;">Formel</div>
<div style="position:absolute;left:964.4px;top:556.2px;width:46.6px;height:11.55px;background:#e4e4e4;"></div>
<div style="position:absolute;left:964.4px;top:559.2px;width:46.6px;text-align:center;font-size:6.4px;line-height:8.40px;color:#222;white-space:pre;">Entfernen</div>
<svg style="position:absolute;left:1010px;top:490px" width="14" height="86" viewBox="1010 490 14 86">
<path d="M1015.3,498.4 L1017.5,495.9 L1019.7,498.4 Z" fill="#8a8a8a"/>
<path d="M1015.3,560.8 L1017.5,563.3 L1019.7,560.8 Z" fill="#8a8a8a"/>
<rect x="1015.5" y="502.4" width="4.2" height="29.6" rx="2.1" fill="#8c8c8c"/>
</svg>
</div></body></html>
